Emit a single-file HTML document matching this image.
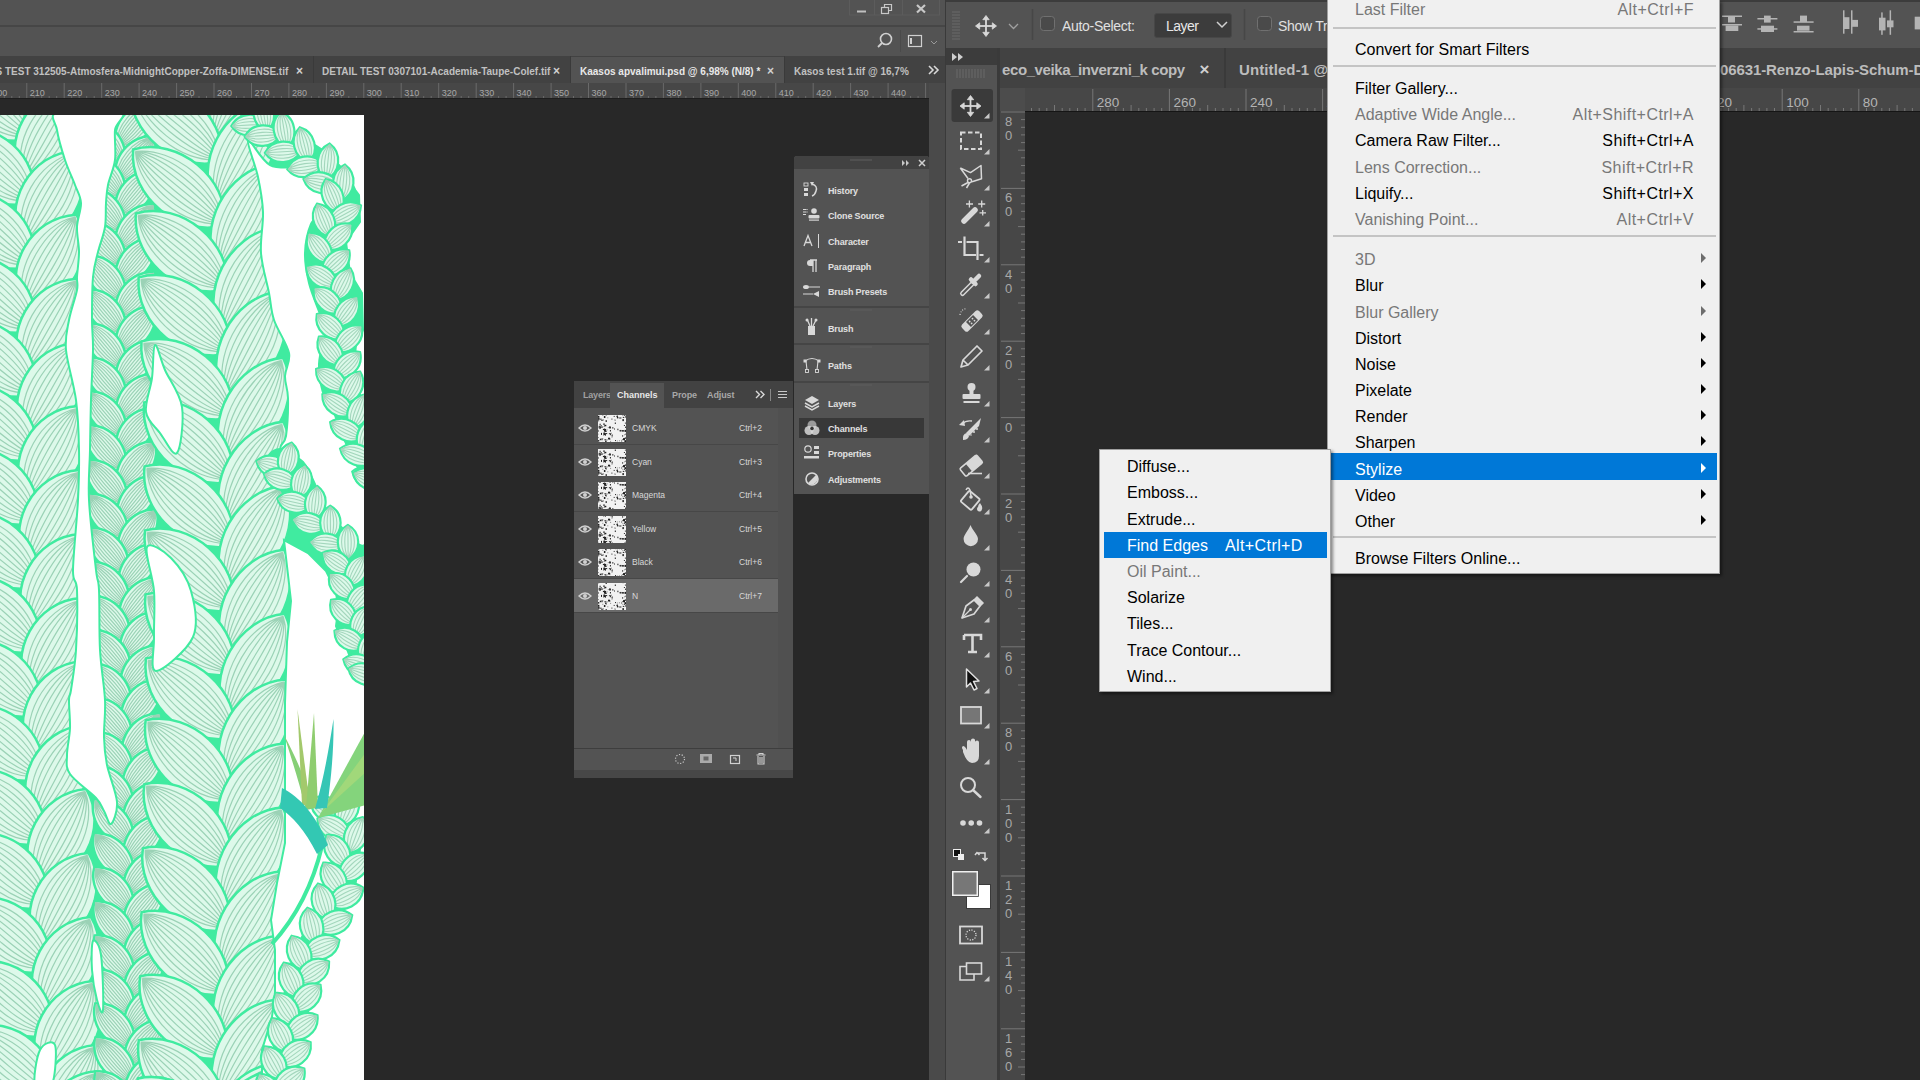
<!DOCTYPE html><html><head><meta charset="utf-8"><style>
html,body{margin:0;padding:0}
body{width:1920px;height:1080px;overflow:hidden;position:relative;background:#282828;font-family:"Liberation Sans",sans-serif}
div{position:absolute;box-sizing:border-box}
.t{white-space:nowrap;line-height:1}
svg{position:absolute;overflow:visible}
</style></head><body><div style="left:0px;top:0px;width:945px;height:25px;background:#535353;"></div>
<div style="left:0px;top:25px;width:945px;height:2px;background:#464646;"></div>
<div style="left:0px;top:27px;width:945px;height:29px;background:#535353;"></div>
<div style="left:0px;top:56px;width:945px;height:27px;background:#424242;"></div>
<div style="left:0px;top:83px;width:929px;height:15px;background:#474747;"></div>
<div style="left:929px;top:83px;width:16px;height:997px;background:#4a4a4a;"></div>
<div style="left:945px;top:0px;width:1px;height:1080px;background:#3a3a3a;"></div>
<svg style="left:0;top:0" width="1920" height="60"><rect x="849.5" y="-1" width="90" height="16" fill="none" stroke="#5c5c5c" stroke-width="1"/><line x1="874.5" y1="0" x2="874.5" y2="15" stroke="#5c5c5c"/><line x1="902.5" y1="0" x2="902.5" y2="15" stroke="#5c5c5c"/><rect x="857" y="10.5" width="9" height="2" fill="#c0c0c0"/><rect x="881.5" y="7.5" width="7" height="6" fill="none" stroke="#c8c8c8" stroke-width="1.2"/><path d="M884.5 7.5 V4.5 H891.5 V10.5 H888.5" fill="none" stroke="#c8c8c8" stroke-width="1.2"/><path d="M917 5 L925 12.5 M925 5 L917 12.5" stroke="#c8c8c8" stroke-width="2.2"/><circle cx="886" cy="39" r="5.5" fill="none" stroke="#d0d0d0" stroke-width="1.6"/><line x1="882" y1="43" x2="878" y2="47" stroke="#d0d0d0" stroke-width="1.8"/><line x1="900.5" y1="30" x2="900.5" y2="52" stroke="#4a4a4a"/><rect x="908.5" y="35.5" width="13" height="11" fill="none" stroke="#d0d0d0" stroke-width="1.2"/><rect x="910" y="38" width="2" height="6" fill="#d0d0d0"/><path d="M931 41 L934 44 L937 41" fill="none" stroke="#999" stroke-width="1"/></svg>
<div style="left:313px;top:56px;width:1px;height:27px;background:#3a3a3a;"></div>
<div style="left:570px;top:56px;width:1px;height:27px;background:#3a3a3a;"></div>
<div style="left:571px;top:57px;width:213px;height:26px;background:#535353;"></div>
<div style="left:784px;top:56px;width:1px;height:27px;background:#3a3a3a;"></div>
<div class="t" style="left:-4.5px;top:67px;font-size:10px;color:#c0c0c0;font-weight:700;">S TEST 312505-Atmosfera-MidnightCopper-Zoffa-DIMENSE.tif</div>
<div class="t" style="left:296px;top:65px;font-size:12px;color:#d0d0d0;font-weight:700;">&#215;</div>
<div class="t" style="left:322px;top:67px;font-size:10px;color:#c0c0c0;font-weight:700;">DETAIL TEST 0307101-Academia-Taupe-Colef.tif</div>
<div class="t" style="left:553px;top:65px;font-size:12px;color:#d0d0d0;font-weight:700;">&#215;</div>
<div class="t" style="left:580px;top:67px;font-size:10px;color:#e8e8e8;font-weight:700;">Kaasos apvalimui.psd @ 6,98% (N/8) *</div>
<div class="t" style="left:767px;top:65px;font-size:12px;color:#d0d0d0;font-weight:700;">&#215;</div>
<div class="t" style="left:794px;top:67px;font-size:10px;color:#c0c0c0;font-weight:700;">Kasos test 1.tif @ 16,7%</div>
<svg style="left:0;top:0" width="945" height="90"><path d="M929,66 L933,70 L929,74 M934,66 L938,70 L934,74" fill="none" stroke="#d8d8d8" stroke-width="1.6"/></svg>
<svg style="left:0;top:0" width="930" height="100"><line x1="-10.7" y1="83" x2="-10.7" y2="98" stroke="#6a6a6a" stroke-width="1"/><text x="-7.7" y="96" font-size="9" fill="#a8a8a8" font-family="Liberation Sans">200</text><line x1="-3.2" y1="96" x2="-3.2" y2="98" stroke="#6a6a6a" stroke-width="1"/><line x1="4.3" y1="96" x2="4.3" y2="98" stroke="#6a6a6a" stroke-width="1"/><line x1="11.8" y1="96" x2="11.8" y2="98" stroke="#6a6a6a" stroke-width="1"/><line x1="19.3" y1="96" x2="19.3" y2="98" stroke="#6a6a6a" stroke-width="1"/><line x1="26.8" y1="83" x2="26.8" y2="98" stroke="#6a6a6a" stroke-width="1"/><text x="29.8" y="96" font-size="9" fill="#a8a8a8" font-family="Liberation Sans">210</text><line x1="34.2" y1="96" x2="34.2" y2="98" stroke="#6a6a6a" stroke-width="1"/><line x1="41.7" y1="96" x2="41.7" y2="98" stroke="#6a6a6a" stroke-width="1"/><line x1="49.2" y1="96" x2="49.2" y2="98" stroke="#6a6a6a" stroke-width="1"/><line x1="56.7" y1="96" x2="56.7" y2="98" stroke="#6a6a6a" stroke-width="1"/><line x1="64.2" y1="83" x2="64.2" y2="98" stroke="#6a6a6a" stroke-width="1"/><text x="67.2" y="96" font-size="9" fill="#a8a8a8" font-family="Liberation Sans">220</text><line x1="71.7" y1="96" x2="71.7" y2="98" stroke="#6a6a6a" stroke-width="1"/><line x1="79.2" y1="96" x2="79.2" y2="98" stroke="#6a6a6a" stroke-width="1"/><line x1="86.7" y1="96" x2="86.7" y2="98" stroke="#6a6a6a" stroke-width="1"/><line x1="94.2" y1="96" x2="94.2" y2="98" stroke="#6a6a6a" stroke-width="1"/><line x1="101.7" y1="83" x2="101.7" y2="98" stroke="#6a6a6a" stroke-width="1"/><text x="104.7" y="96" font-size="9" fill="#a8a8a8" font-family="Liberation Sans">230</text><line x1="109.1" y1="96" x2="109.1" y2="98" stroke="#6a6a6a" stroke-width="1"/><line x1="116.6" y1="96" x2="116.6" y2="98" stroke="#6a6a6a" stroke-width="1"/><line x1="124.1" y1="96" x2="124.1" y2="98" stroke="#6a6a6a" stroke-width="1"/><line x1="131.6" y1="96" x2="131.6" y2="98" stroke="#6a6a6a" stroke-width="1"/><line x1="139.1" y1="83" x2="139.1" y2="98" stroke="#6a6a6a" stroke-width="1"/><text x="142.1" y="96" font-size="9" fill="#a8a8a8" font-family="Liberation Sans">240</text><line x1="146.6" y1="96" x2="146.6" y2="98" stroke="#6a6a6a" stroke-width="1"/><line x1="154.1" y1="96" x2="154.1" y2="98" stroke="#6a6a6a" stroke-width="1"/><line x1="161.6" y1="96" x2="161.6" y2="98" stroke="#6a6a6a" stroke-width="1"/><line x1="169.1" y1="96" x2="169.1" y2="98" stroke="#6a6a6a" stroke-width="1"/><line x1="176.6" y1="83" x2="176.6" y2="98" stroke="#6a6a6a" stroke-width="1"/><text x="179.6" y="96" font-size="9" fill="#a8a8a8" font-family="Liberation Sans">250</text><line x1="184.0" y1="96" x2="184.0" y2="98" stroke="#6a6a6a" stroke-width="1"/><line x1="191.5" y1="96" x2="191.5" y2="98" stroke="#6a6a6a" stroke-width="1"/><line x1="199.0" y1="96" x2="199.0" y2="98" stroke="#6a6a6a" stroke-width="1"/><line x1="206.5" y1="96" x2="206.5" y2="98" stroke="#6a6a6a" stroke-width="1"/><line x1="214.0" y1="83" x2="214.0" y2="98" stroke="#6a6a6a" stroke-width="1"/><text x="217.0" y="96" font-size="9" fill="#a8a8a8" font-family="Liberation Sans">260</text><line x1="221.5" y1="96" x2="221.5" y2="98" stroke="#6a6a6a" stroke-width="1"/><line x1="229.0" y1="96" x2="229.0" y2="98" stroke="#6a6a6a" stroke-width="1"/><line x1="236.5" y1="96" x2="236.5" y2="98" stroke="#6a6a6a" stroke-width="1"/><line x1="244.0" y1="96" x2="244.0" y2="98" stroke="#6a6a6a" stroke-width="1"/><line x1="251.5" y1="83" x2="251.5" y2="98" stroke="#6a6a6a" stroke-width="1"/><text x="254.5" y="96" font-size="9" fill="#a8a8a8" font-family="Liberation Sans">270</text><line x1="258.9" y1="96" x2="258.9" y2="98" stroke="#6a6a6a" stroke-width="1"/><line x1="266.4" y1="96" x2="266.4" y2="98" stroke="#6a6a6a" stroke-width="1"/><line x1="273.9" y1="96" x2="273.9" y2="98" stroke="#6a6a6a" stroke-width="1"/><line x1="281.4" y1="96" x2="281.4" y2="98" stroke="#6a6a6a" stroke-width="1"/><line x1="288.9" y1="83" x2="288.9" y2="98" stroke="#6a6a6a" stroke-width="1"/><text x="291.9" y="96" font-size="9" fill="#a8a8a8" font-family="Liberation Sans">280</text><line x1="296.4" y1="96" x2="296.4" y2="98" stroke="#6a6a6a" stroke-width="1"/><line x1="303.9" y1="96" x2="303.9" y2="98" stroke="#6a6a6a" stroke-width="1"/><line x1="311.4" y1="96" x2="311.4" y2="98" stroke="#6a6a6a" stroke-width="1"/><line x1="318.9" y1="96" x2="318.9" y2="98" stroke="#6a6a6a" stroke-width="1"/><line x1="326.4" y1="83" x2="326.4" y2="98" stroke="#6a6a6a" stroke-width="1"/><text x="329.4" y="96" font-size="9" fill="#a8a8a8" font-family="Liberation Sans">290</text><line x1="333.8" y1="96" x2="333.8" y2="98" stroke="#6a6a6a" stroke-width="1"/><line x1="341.3" y1="96" x2="341.3" y2="98" stroke="#6a6a6a" stroke-width="1"/><line x1="348.8" y1="96" x2="348.8" y2="98" stroke="#6a6a6a" stroke-width="1"/><line x1="356.3" y1="96" x2="356.3" y2="98" stroke="#6a6a6a" stroke-width="1"/><line x1="363.8" y1="83" x2="363.8" y2="98" stroke="#6a6a6a" stroke-width="1"/><text x="366.8" y="96" font-size="9" fill="#a8a8a8" font-family="Liberation Sans">300</text><line x1="371.3" y1="96" x2="371.3" y2="98" stroke="#6a6a6a" stroke-width="1"/><line x1="378.8" y1="96" x2="378.8" y2="98" stroke="#6a6a6a" stroke-width="1"/><line x1="386.3" y1="96" x2="386.3" y2="98" stroke="#6a6a6a" stroke-width="1"/><line x1="393.8" y1="96" x2="393.8" y2="98" stroke="#6a6a6a" stroke-width="1"/><line x1="401.2" y1="83" x2="401.2" y2="98" stroke="#6a6a6a" stroke-width="1"/><text x="404.2" y="96" font-size="9" fill="#a8a8a8" font-family="Liberation Sans">310</text><line x1="408.7" y1="96" x2="408.7" y2="98" stroke="#6a6a6a" stroke-width="1"/><line x1="416.2" y1="96" x2="416.2" y2="98" stroke="#6a6a6a" stroke-width="1"/><line x1="423.7" y1="96" x2="423.7" y2="98" stroke="#6a6a6a" stroke-width="1"/><line x1="431.2" y1="96" x2="431.2" y2="98" stroke="#6a6a6a" stroke-width="1"/><line x1="438.7" y1="83" x2="438.7" y2="98" stroke="#6a6a6a" stroke-width="1"/><text x="441.7" y="96" font-size="9" fill="#a8a8a8" font-family="Liberation Sans">320</text><line x1="446.2" y1="96" x2="446.2" y2="98" stroke="#6a6a6a" stroke-width="1"/><line x1="453.7" y1="96" x2="453.7" y2="98" stroke="#6a6a6a" stroke-width="1"/><line x1="461.2" y1="96" x2="461.2" y2="98" stroke="#6a6a6a" stroke-width="1"/><line x1="468.7" y1="96" x2="468.7" y2="98" stroke="#6a6a6a" stroke-width="1"/><line x1="476.2" y1="83" x2="476.2" y2="98" stroke="#6a6a6a" stroke-width="1"/><text x="479.2" y="96" font-size="9" fill="#a8a8a8" font-family="Liberation Sans">330</text><line x1="483.6" y1="96" x2="483.6" y2="98" stroke="#6a6a6a" stroke-width="1"/><line x1="491.1" y1="96" x2="491.1" y2="98" stroke="#6a6a6a" stroke-width="1"/><line x1="498.6" y1="96" x2="498.6" y2="98" stroke="#6a6a6a" stroke-width="1"/><line x1="506.1" y1="96" x2="506.1" y2="98" stroke="#6a6a6a" stroke-width="1"/><line x1="513.6" y1="83" x2="513.6" y2="98" stroke="#6a6a6a" stroke-width="1"/><text x="516.6" y="96" font-size="9" fill="#a8a8a8" font-family="Liberation Sans">340</text><line x1="521.1" y1="96" x2="521.1" y2="98" stroke="#6a6a6a" stroke-width="1"/><line x1="528.6" y1="96" x2="528.6" y2="98" stroke="#6a6a6a" stroke-width="1"/><line x1="536.1" y1="96" x2="536.1" y2="98" stroke="#6a6a6a" stroke-width="1"/><line x1="543.6" y1="96" x2="543.6" y2="98" stroke="#6a6a6a" stroke-width="1"/><line x1="551.1" y1="83" x2="551.1" y2="98" stroke="#6a6a6a" stroke-width="1"/><text x="554.1" y="96" font-size="9" fill="#a8a8a8" font-family="Liberation Sans">350</text><line x1="558.5" y1="96" x2="558.5" y2="98" stroke="#6a6a6a" stroke-width="1"/><line x1="566.0" y1="96" x2="566.0" y2="98" stroke="#6a6a6a" stroke-width="1"/><line x1="573.5" y1="96" x2="573.5" y2="98" stroke="#6a6a6a" stroke-width="1"/><line x1="581.0" y1="96" x2="581.0" y2="98" stroke="#6a6a6a" stroke-width="1"/><line x1="588.5" y1="83" x2="588.5" y2="98" stroke="#6a6a6a" stroke-width="1"/><text x="591.5" y="96" font-size="9" fill="#a8a8a8" font-family="Liberation Sans">360</text><line x1="596.0" y1="96" x2="596.0" y2="98" stroke="#6a6a6a" stroke-width="1"/><line x1="603.5" y1="96" x2="603.5" y2="98" stroke="#6a6a6a" stroke-width="1"/><line x1="611.0" y1="96" x2="611.0" y2="98" stroke="#6a6a6a" stroke-width="1"/><line x1="618.5" y1="96" x2="618.5" y2="98" stroke="#6a6a6a" stroke-width="1"/><line x1="626.0" y1="83" x2="626.0" y2="98" stroke="#6a6a6a" stroke-width="1"/><text x="629.0" y="96" font-size="9" fill="#a8a8a8" font-family="Liberation Sans">370</text><line x1="633.4" y1="96" x2="633.4" y2="98" stroke="#6a6a6a" stroke-width="1"/><line x1="640.9" y1="96" x2="640.9" y2="98" stroke="#6a6a6a" stroke-width="1"/><line x1="648.4" y1="96" x2="648.4" y2="98" stroke="#6a6a6a" stroke-width="1"/><line x1="655.9" y1="96" x2="655.9" y2="98" stroke="#6a6a6a" stroke-width="1"/><line x1="663.4" y1="83" x2="663.4" y2="98" stroke="#6a6a6a" stroke-width="1"/><text x="666.4" y="96" font-size="9" fill="#a8a8a8" font-family="Liberation Sans">380</text><line x1="670.9" y1="96" x2="670.9" y2="98" stroke="#6a6a6a" stroke-width="1"/><line x1="678.4" y1="96" x2="678.4" y2="98" stroke="#6a6a6a" stroke-width="1"/><line x1="685.9" y1="96" x2="685.9" y2="98" stroke="#6a6a6a" stroke-width="1"/><line x1="693.4" y1="96" x2="693.4" y2="98" stroke="#6a6a6a" stroke-width="1"/><line x1="700.9" y1="83" x2="700.9" y2="98" stroke="#6a6a6a" stroke-width="1"/><text x="703.9" y="96" font-size="9" fill="#a8a8a8" font-family="Liberation Sans">390</text><line x1="708.3" y1="96" x2="708.3" y2="98" stroke="#6a6a6a" stroke-width="1"/><line x1="715.8" y1="96" x2="715.8" y2="98" stroke="#6a6a6a" stroke-width="1"/><line x1="723.3" y1="96" x2="723.3" y2="98" stroke="#6a6a6a" stroke-width="1"/><line x1="730.8" y1="96" x2="730.8" y2="98" stroke="#6a6a6a" stroke-width="1"/><line x1="738.3" y1="83" x2="738.3" y2="98" stroke="#6a6a6a" stroke-width="1"/><text x="741.3" y="96" font-size="9" fill="#a8a8a8" font-family="Liberation Sans">400</text><line x1="745.8" y1="96" x2="745.8" y2="98" stroke="#6a6a6a" stroke-width="1"/><line x1="753.3" y1="96" x2="753.3" y2="98" stroke="#6a6a6a" stroke-width="1"/><line x1="760.8" y1="96" x2="760.8" y2="98" stroke="#6a6a6a" stroke-width="1"/><line x1="768.3" y1="96" x2="768.3" y2="98" stroke="#6a6a6a" stroke-width="1"/><line x1="775.8" y1="83" x2="775.8" y2="98" stroke="#6a6a6a" stroke-width="1"/><text x="778.8" y="96" font-size="9" fill="#a8a8a8" font-family="Liberation Sans">410</text><line x1="783.2" y1="96" x2="783.2" y2="98" stroke="#6a6a6a" stroke-width="1"/><line x1="790.7" y1="96" x2="790.7" y2="98" stroke="#6a6a6a" stroke-width="1"/><line x1="798.2" y1="96" x2="798.2" y2="98" stroke="#6a6a6a" stroke-width="1"/><line x1="805.7" y1="96" x2="805.7" y2="98" stroke="#6a6a6a" stroke-width="1"/><line x1="813.2" y1="83" x2="813.2" y2="98" stroke="#6a6a6a" stroke-width="1"/><text x="816.2" y="96" font-size="9" fill="#a8a8a8" font-family="Liberation Sans">420</text><line x1="820.7" y1="96" x2="820.7" y2="98" stroke="#6a6a6a" stroke-width="1"/><line x1="828.2" y1="96" x2="828.2" y2="98" stroke="#6a6a6a" stroke-width="1"/><line x1="835.7" y1="96" x2="835.7" y2="98" stroke="#6a6a6a" stroke-width="1"/><line x1="843.2" y1="96" x2="843.2" y2="98" stroke="#6a6a6a" stroke-width="1"/><line x1="850.6" y1="83" x2="850.6" y2="98" stroke="#6a6a6a" stroke-width="1"/><text x="853.6" y="96" font-size="9" fill="#a8a8a8" font-family="Liberation Sans">430</text><line x1="858.1" y1="96" x2="858.1" y2="98" stroke="#6a6a6a" stroke-width="1"/><line x1="865.6" y1="96" x2="865.6" y2="98" stroke="#6a6a6a" stroke-width="1"/><line x1="873.1" y1="96" x2="873.1" y2="98" stroke="#6a6a6a" stroke-width="1"/><line x1="880.6" y1="96" x2="880.6" y2="98" stroke="#6a6a6a" stroke-width="1"/><line x1="888.1" y1="83" x2="888.1" y2="98" stroke="#6a6a6a" stroke-width="1"/><text x="891.1" y="96" font-size="9" fill="#a8a8a8" font-family="Liberation Sans">440</text><line x1="895.6" y1="96" x2="895.6" y2="98" stroke="#6a6a6a" stroke-width="1"/><line x1="903.1" y1="96" x2="903.1" y2="98" stroke="#6a6a6a" stroke-width="1"/><line x1="910.6" y1="96" x2="910.6" y2="98" stroke="#6a6a6a" stroke-width="1"/><line x1="918.1" y1="96" x2="918.1" y2="98" stroke="#6a6a6a" stroke-width="1"/><line x1="925.6" y1="83" x2="925.6" y2="98" stroke="#6a6a6a" stroke-width="1"/></svg>
<div style="left:0px;top:98px;width:929px;height:1px;background:#1e1e1e;"></div>
<div style="left:0px;top:115px;width:364px;height:965px;background:#ffffff;"></div>
<svg style="left:0;top:115px" width="364" height="965" viewBox="0 115 364 965"><defs><clipPath id="cv"><rect x="0" y="115" width="364" height="965"/></clipPath><g id="lf"><path d="M-1,0 C-0.55,-1.05 0.55,-1.05 1,0 C0.55,1.05 -0.55,1.05 -1,0Z" fill="#ddf9ea" stroke="#40eba0" stroke-width="2.5" vector-effect="non-scaling-stroke"/><path d="M-0.95,0 C-0.5,-0.76 0.5,-0.76 0.95,0 M-0.95,0 C-0.5,-0.57 0.5,-0.57 0.95,0 M-0.95,0 C-0.5,-0.38 0.5,-0.38 0.95,0 M-0.95,0 C-0.5,-0.19 0.5,-0.19 0.95,0 M-0.95,0 L0.95,0 M-0.95,0 C-0.5,0.19 0.5,0.19 0.95,0 M-0.95,0 C-0.5,0.38 0.5,0.38 0.95,0 M-0.95,0 C-0.5,0.57 0.5,0.57 0.95,0 M-0.95,0 C-0.5,0.76 0.5,0.76 0.95,0" fill="none" stroke="#9bd2b6" stroke-width="1.2" vector-effect="non-scaling-stroke"/></g><g id="lfs"><path d="M-1,0 C-0.55,-1.05 0.55,-1.05 1,0 C0.55,1.05 -0.55,1.05 -1,0Z" fill="#ddf9ea" stroke="#40eba0" stroke-width="2.2" vector-effect="non-scaling-stroke"/><path d="M-0.95,0 C-0.5,-0.66 0.5,-0.66 0.95,0 M-0.95,0 C-0.5,-0.33 0.5,-0.33 0.95,0 M-0.95,0 L0.95,0 M-0.95,0 C-0.5,0.33 0.5,0.33 0.95,0 M-0.95,0 C-0.5,0.66 0.5,0.66 0.95,0" fill="none" stroke="#a3d6bc" stroke-width="1.1" vector-effect="non-scaling-stroke"/></g></defs><g clip-path="url(#cv)"><rect x="0" y="115" width="364" height="965" fill="#40eba0"/><use href="#lf" transform="translate(-7.8,60.3) rotate(41.5) scale(54.2,37.1)"/><use href="#lf" transform="translate(48.1,69.8) rotate(119.5) scale(54.2,37.1)"/><use href="#lf" transform="translate(-7.4,102.3) rotate(41.5) scale(54.2,37.1)"/><use href="#lf" transform="translate(48.7,133.8) rotate(119.5) scale(54.2,37.1)"/><use href="#lf" transform="translate(-6.8,166.3) rotate(41.5) scale(54.2,37.1)"/><use href="#lf" transform="translate(49.3,197.8) rotate(119.5) scale(54.2,37.1)"/><use href="#lf" transform="translate(-6.3,230.3) rotate(41.5) scale(54.2,37.1)"/><use href="#lf" transform="translate(49.8,261.8) rotate(119.5) scale(54.2,37.1)"/><use href="#lf" transform="translate(-5.7,294.3) rotate(41.5) scale(54.2,37.1)"/><use href="#lf" transform="translate(50.4,325.8) rotate(119.5) scale(54.2,37.1)"/><use href="#lf" transform="translate(-5.1,358.3) rotate(41.5) scale(54.2,37.1)"/><use href="#lf" transform="translate(51.0,389.8) rotate(119.5) scale(54.2,37.1)"/><use href="#lf" transform="translate(-4.4,422.5) rotate(41.0) scale(54.2,37.1)"/><use href="#lf" transform="translate(51.9,453.5) rotate(119.0) scale(54.2,37.1)"/><use href="#lf" transform="translate(-3.3,486.5) rotate(41.0) scale(54.2,37.1)"/><use href="#lf" transform="translate(53.0,517.5) rotate(119.0) scale(54.2,37.1)"/><use href="#lf" transform="translate(-2.3,550.5) rotate(41.0) scale(54.2,37.1)"/><use href="#lf" transform="translate(54.1,581.5) rotate(119.0) scale(54.2,37.1)"/><use href="#lf" transform="translate(-1.2,614.5) rotate(41.0) scale(54.2,37.1)"/><use href="#lf" transform="translate(55.1,645.5) rotate(119.0) scale(54.2,37.1)"/><use href="#lf" transform="translate(-0.1,678.4) rotate(41.0) scale(54.2,37.1)"/><use href="#lf" transform="translate(56.4,709.0) rotate(118.0) scale(54.2,37.1)"/><use href="#lf" transform="translate(1.8,743.0) rotate(40.0) scale(54.2,37.1)"/><use href="#lf" transform="translate(58.7,773.0) rotate(118.0) scale(54.2,37.1)"/><use href="#lf" transform="translate(4.0,806.9) rotate(40.0) scale(54.2,37.1)"/><use href="#lf" transform="translate(60.9,836.9) rotate(118.0) scale(54.2,37.1)"/><use href="#lf" transform="translate(6.3,870.9) rotate(40.0) scale(54.2,37.1)"/><use href="#lf" transform="translate(63.2,900.9) rotate(118.0) scale(54.2,37.1)"/><use href="#lf" transform="translate(8.6,934.9) rotate(40.0) scale(54.2,37.1)"/><use href="#lf" transform="translate(65.5,964.8) rotate(118.0) scale(54.2,37.1)"/><use href="#lf" transform="translate(10.9,998.8) rotate(40.0) scale(54.2,37.1)"/><use href="#lf" transform="translate(67.8,1028.8) rotate(118.0) scale(54.2,37.1)"/><use href="#lf" transform="translate(13.2,1062.8) rotate(40.0) scale(54.2,37.1)"/><use href="#lf" transform="translate(70.1,1092.8) rotate(118.0) scale(54.2,37.1)"/><use href="#lf" transform="translate(15.3,1121.1) rotate(40.0) scale(54.2,37.1)"/><use href="#lf" transform="translate(71.0,1119.1) rotate(118.0) scale(54.2,37.1)"/><use href="#lf" transform="translate(15.3,1121.1) rotate(40.0) scale(54.2,37.1)"/><use href="#lf" transform="translate(105.0,120.0) rotate(49.8) scale(29.6,18.7)"/><use href="#lf" transform="translate(135.1,125.0) rotate(129.8) scale(29.6,18.7)"/><use href="#lf" transform="translate(105.0,142.0) rotate(49.8) scale(29.6,18.7)"/><use href="#lf" transform="translate(135.2,159.0) rotate(129.8) scale(29.6,18.7)"/><use href="#lf" transform="translate(105.1,176.0) rotate(49.8) scale(29.6,18.7)"/><use href="#lf" transform="translate(135.3,193.0) rotate(129.8) scale(29.6,18.7)"/><use href="#lf" transform="translate(105.2,210.0) rotate(49.8) scale(29.6,18.7)"/><use href="#lf" transform="translate(135.4,227.0) rotate(129.8) scale(29.6,18.7)"/><use href="#lf" transform="translate(105.3,244.0) rotate(49.8) scale(29.6,18.7)"/><use href="#lf" transform="translate(135.5,261.0) rotate(129.8) scale(29.6,18.7)"/><use href="#lf" transform="translate(105.4,278.0) rotate(49.8) scale(29.6,18.7)"/><use href="#lf" transform="translate(135.6,295.0) rotate(129.8) scale(29.6,18.7)"/><use href="#lf" transform="translate(105.5,312.0) rotate(49.8) scale(29.6,18.7)"/><use href="#lf" transform="translate(135.7,329.0) rotate(129.8) scale(29.6,18.7)"/><use href="#lf" transform="translate(105.6,346.0) rotate(49.8) scale(29.6,18.7)"/><use href="#lf" transform="translate(135.8,363.0) rotate(129.8) scale(29.6,18.7)"/><use href="#lf" transform="translate(105.7,380.0) rotate(49.8) scale(29.6,18.7)"/><use href="#lf" transform="translate(135.9,397.0) rotate(129.8) scale(29.6,18.7)"/><use href="#lf" transform="translate(105.9,414.0) rotate(49.8) scale(29.6,18.7)"/><use href="#lf" transform="translate(136.0,431.0) rotate(129.8) scale(29.6,18.7)"/><use href="#lf" transform="translate(106.0,448.0) rotate(49.8) scale(29.6,18.7)"/><use href="#lf" transform="translate(136.3,464.7) rotate(128.9) scale(29.6,18.7)"/><use href="#lf" transform="translate(106.6,482.3) rotate(48.9) scale(29.6,18.7)"/><use href="#lf" transform="translate(137.0,498.7) rotate(128.9) scale(29.6,18.7)"/><use href="#lf" transform="translate(107.3,516.3) rotate(48.9) scale(29.6,18.7)"/><use href="#lf" transform="translate(137.7,532.7) rotate(128.9) scale(29.6,18.7)"/><use href="#lf" transform="translate(108.0,550.3) rotate(48.9) scale(29.6,18.7)"/><use href="#lf" transform="translate(138.4,566.7) rotate(128.9) scale(29.6,18.7)"/><use href="#lf" transform="translate(108.6,584.3) rotate(48.9) scale(29.6,18.7)"/><use href="#lf" transform="translate(139.1,600.7) rotate(128.9) scale(29.6,18.7)"/><use href="#lf" transform="translate(109.3,618.3) rotate(48.9) scale(29.6,18.7)"/><use href="#lf" transform="translate(139.7,634.7) rotate(128.9) scale(29.6,18.7)"/><use href="#lf" transform="translate(110.0,652.3) rotate(48.9) scale(29.6,18.7)"/><use href="#lf" transform="translate(140.4,668.7) rotate(128.9) scale(29.6,18.7)"/><use href="#lf" transform="translate(110.7,686.3) rotate(48.9) scale(29.6,18.7)"/><use href="#lf" transform="translate(141.1,702.6) rotate(128.9) scale(29.6,18.7)"/><use href="#lf" transform="translate(111.4,720.2) rotate(48.9) scale(29.6,18.7)"/><use href="#lf" transform="translate(141.8,736.6) rotate(128.9) scale(29.6,18.7)"/><use href="#lf" transform="translate(112.0,754.2) rotate(48.9) scale(29.6,18.7)"/><use href="#lf" transform="translate(142.5,770.6) rotate(128.9) scale(29.6,18.7)"/><use href="#lf" transform="translate(112.7,788.2) rotate(48.9) scale(29.6,18.7)"/><use href="#lf" transform="translate(143.1,804.8) rotate(129.6) scale(29.6,18.7)"/><use href="#lf" transform="translate(113.1,822.0) rotate(49.6) scale(29.6,18.7)"/><use href="#lf" transform="translate(143.3,838.8) rotate(129.6) scale(29.6,18.7)"/><use href="#lf" transform="translate(113.3,856.0) rotate(49.6) scale(29.6,18.7)"/><use href="#lf" transform="translate(143.5,872.8) rotate(129.6) scale(29.6,18.7)"/><use href="#lf" transform="translate(113.5,890.0) rotate(49.6) scale(29.6,18.7)"/><use href="#lf" transform="translate(143.7,906.8) rotate(129.6) scale(29.6,18.7)"/><use href="#lf" transform="translate(113.7,924.0) rotate(49.6) scale(29.6,18.7)"/><use href="#lf" transform="translate(143.9,940.8) rotate(129.6) scale(29.6,18.7)"/><use href="#lf" transform="translate(113.9,958.0) rotate(49.6) scale(29.6,18.7)"/><use href="#lf" transform="translate(144.1,974.8) rotate(129.6) scale(29.6,18.7)"/><use href="#lf" transform="translate(114.2,992.0) rotate(49.6) scale(29.6,18.7)"/><use href="#lf" transform="translate(144.3,1008.8) rotate(129.6) scale(29.6,18.7)"/><use href="#lf" transform="translate(114.4,1026.0) rotate(49.6) scale(29.6,18.7)"/><use href="#lf" transform="translate(144.6,1042.8) rotate(129.6) scale(29.6,18.7)"/><use href="#lf" transform="translate(114.6,1060.0) rotate(49.6) scale(29.6,18.7)"/><use href="#lf" transform="translate(144.8,1076.8) rotate(129.6) scale(29.6,18.7)"/><use href="#lf" transform="translate(114.8,1094.0) rotate(49.6) scale(29.6,18.7)"/><use href="#lf" transform="translate(145.0,1110.8) rotate(129.6) scale(29.6,18.7)"/><use href="#lf" transform="translate(115.0,1120.1) rotate(49.6) scale(29.6,18.7)"/><use href="#lf" transform="translate(145.0,1119.9) rotate(129.6) scale(29.6,18.7)"/><use href="#lf" transform="translate(173.4,61.5) rotate(39.5) scale(59.5,37.1)"/><use href="#lf" transform="translate(239.8,88.6) rotate(117.5) scale(59.5,37.1)"/><use href="#lf" transform="translate(176.2,123.4) rotate(39.5) scale(59.5,37.1)"/><use href="#lf" transform="translate(242.6,152.5) rotate(117.5) scale(59.5,37.1)"/><use href="#lf" transform="translate(179.0,187.4) rotate(39.5) scale(59.5,37.1)"/><use href="#lf" transform="translate(245.4,216.5) rotate(117.5) scale(59.5,37.1)"/><use href="#lf" transform="translate(181.8,251.3) rotate(39.5) scale(59.5,37.1)"/><use href="#lf" transform="translate(248.3,280.4) rotate(117.5) scale(59.5,37.1)"/><use href="#lf" transform="translate(184.6,315.2) rotate(39.5) scale(59.5,37.1)"/><use href="#lf" transform="translate(251.1,344.3) rotate(117.5) scale(59.5,37.1)"/><use href="#lf" transform="translate(187.4,379.2) rotate(39.5) scale(59.5,37.1)"/><use href="#lf" transform="translate(253.6,409.5) rotate(119.6) scale(59.5,37.1)"/><use href="#lf" transform="translate(188.7,441.9) rotate(41.6) scale(59.5,37.1)"/><use href="#lf" transform="translate(254.0,473.5) rotate(119.6) scale(59.5,37.1)"/><use href="#lf" transform="translate(189.1,505.9) rotate(41.6) scale(59.5,37.1)"/><use href="#lf" transform="translate(254.4,537.5) rotate(119.6) scale(59.5,37.1)"/><use href="#lf" transform="translate(189.5,569.9) rotate(41.6) scale(59.5,37.1)"/><use href="#lf" transform="translate(254.8,601.5) rotate(119.6) scale(59.5,37.1)"/><use href="#lf" transform="translate(190.0,633.9) rotate(41.6) scale(59.5,37.1)"/><use href="#lf" transform="translate(255.3,665.5) rotate(119.6) scale(59.5,37.1)"/><use href="#lf" transform="translate(190.4,697.9) rotate(41.6) scale(59.5,37.1)"/><use href="#lf" transform="translate(254.9,730.3) rotate(121.2) scale(59.5,37.1)"/><use href="#lf" transform="translate(189.1,760.9) rotate(43.2) scale(59.5,37.1)"/><use href="#lf" transform="translate(253.5,794.3) rotate(121.2) scale(59.5,37.1)"/><use href="#lf" transform="translate(187.7,824.9) rotate(43.2) scale(59.5,37.1)"/><use href="#lf" transform="translate(252.1,858.3) rotate(121.2) scale(59.5,37.1)"/><use href="#lf" transform="translate(186.3,888.9) rotate(43.2) scale(59.5,37.1)"/><use href="#lf" transform="translate(250.7,922.3) rotate(121.2) scale(59.5,37.1)"/><use href="#lf" transform="translate(185.0,952.9) rotate(43.2) scale(59.5,37.1)"/><use href="#lf" transform="translate(249.4,986.3) rotate(121.2) scale(59.5,37.1)"/><use href="#lf" transform="translate(183.6,1016.9) rotate(43.2) scale(59.5,37.1)"/><use href="#lf" transform="translate(248.0,1050.3) rotate(121.2) scale(59.5,37.1)"/><use href="#lf" transform="translate(182.2,1080.9) rotate(43.2) scale(59.5,37.1)"/><use href="#lf" transform="translate(246.6,1114.2) rotate(121.2) scale(59.5,37.1)"/><use href="#lf" transform="translate(181.4,1119.3) rotate(43.2) scale(59.5,37.1)"/><use href="#lf" transform="translate(246.5,1120.7) rotate(121.2) scale(59.5,37.1)"/><use href="#lf" transform="translate(181.4,1119.3) rotate(43.2) scale(59.5,37.1)"/><path d="M58.0,112.0 C68.5,109.0 110.5,109.0 120.0,112.0 C129.5,115.0 115.8,122.0 115.0,130.0 C114.2,138.0 116.2,150.8 115.0,160.0 C113.8,169.2 109.5,177.8 108.0,185.0 C106.5,192.2 106.5,196.0 106.0,203.0 C105.5,210.0 106.3,218.8 105.0,227.0 C103.7,235.2 100.0,243.7 98.0,252.0 C96.0,260.3 94.0,265.7 93.0,277.0 C92.0,288.3 92.0,307.8 92.0,320.0 C92.0,332.2 93.2,336.7 93.0,350.0 C92.8,363.3 91.5,383.3 91.0,400.0 C90.5,416.7 90.3,433.3 90.0,450.0 C89.7,466.7 88.0,480.0 89.0,500.0 C90.0,520.0 94.3,555.0 96.0,570.0 C97.7,585.0 98.3,576.7 99.0,590.0 C99.7,603.3 99.0,631.7 100.0,650.0 C101.0,668.3 104.3,685.5 105.0,700.0 C105.7,714.5 103.7,726.2 104.0,737.0 C104.3,747.8 104.8,754.2 107.0,765.0 C109.2,775.8 116.3,792.2 117.0,802.0 C117.7,811.8 113.2,822.5 111.0,824.0 C108.8,825.5 106.5,815.3 104.0,811.0 C101.5,806.7 101.7,804.2 96.0,798.0 C90.3,791.8 74.8,781.2 70.0,774.0 C65.2,766.8 67.0,762.7 67.0,755.0 C67.0,747.3 69.7,737.2 70.0,728.0 C70.3,718.8 68.8,706.3 69.0,700.0 C69.2,693.7 69.8,698.3 71.0,690.0 C72.2,681.7 75.0,666.7 76.0,650.0 C77.0,633.3 77.5,603.3 77.0,590.0 C76.5,576.7 72.8,585.0 73.0,570.0 C73.2,555.0 77.0,520.0 78.0,500.0 C79.0,480.0 79.3,466.7 79.0,450.0 C78.7,433.3 78.2,416.7 76.0,400.0 C73.8,383.3 67.2,363.3 66.0,350.0 C64.8,336.7 67.2,330.0 69.0,320.0 C70.8,310.0 75.7,297.2 77.0,290.0 C78.3,282.8 76.7,283.3 77.0,277.0 C77.3,270.7 79.0,260.3 79.0,252.0 C79.0,243.7 76.7,235.2 77.0,227.0 C77.3,218.8 81.3,210.0 81.0,203.0 C80.7,196.0 77.7,192.2 75.0,185.0 C72.3,177.8 68.0,169.2 65.0,160.0 C62.0,150.8 58.2,138.0 57.0,130.0 C55.8,122.0 47.5,115.0 58.0,112.0Z" fill="#ffffff" stroke="#40eba0" stroke-width="2"/><path d="M155.0,345.0 C157.2,343.7 160.5,359.7 165.0,370.0 C169.5,380.3 180.0,393.2 182.0,407.0 C184.0,420.8 180.7,448.7 177.0,453.0 C173.3,457.3 165.2,439.8 160.0,433.0 C154.8,426.2 147.3,421.2 146.0,412.0 C144.7,402.8 150.5,389.2 152.0,378.0 C153.5,366.8 152.8,346.3 155.0,345.0Z" fill="#ffffff" stroke="#40eba0" stroke-width="2"/><path d="M147.0,547.0 C149.8,541.5 163.7,550.7 171.0,558.0 C178.3,565.3 187.3,577.8 191.0,591.0 C194.7,604.2 198.8,623.7 193.0,637.0 C187.2,650.3 162.5,671.0 156.0,671.0 C149.5,671.0 154.3,650.3 154.0,637.0 C153.7,623.7 155.2,606.0 154.0,591.0 C152.8,576.0 144.2,552.5 147.0,547.0Z" fill="#ffffff" stroke="#40eba0" stroke-width="2"/><path d="M281,112 L368,112 L368,400 L363,400 L358,391 L354,365 L356,345 L363,330 L362,293 L350,273 L346,242 L360,222 L359,195 L344,175 L311,151 L281,122Z" fill="#ffffff" stroke="#40eba0" stroke-width="2"/><path d="M248.0,140.0 C250.0,138.0 260.5,159.8 270.0,165.0 C279.5,170.2 295.7,164.5 305.0,171.0 C314.3,177.5 325.0,195.2 326.0,204.0 C327.0,212.8 314.5,215.8 311.0,224.0 C307.5,232.2 305.3,243.2 305.0,253.0 C304.7,262.8 306.5,272.8 309.0,283.0 C311.5,293.2 317.2,306.2 320.0,314.0 C322.8,321.8 326.2,321.7 326.0,330.0 C325.8,338.3 319.2,352.7 319.0,364.0 C318.8,375.3 321.3,388.7 325.0,398.0 C328.7,407.3 335.0,410.8 341.0,420.0 C347.0,429.2 356.8,446.0 361.0,453.0 C365.2,460.0 365.2,447.2 366.0,462.0 C366.8,476.8 369.5,530.5 366.0,542.0 C362.5,553.5 351.3,535.8 345.0,531.0 C338.7,526.2 332.3,519.3 328.0,513.0 C323.7,506.7 323.2,501.5 319.0,493.0 C314.8,484.5 309.3,469.3 303.0,462.0 C296.7,454.7 283.8,453.3 281.0,449.0 C278.2,444.7 284.8,444.5 286.0,436.0 C287.2,427.5 288.2,408.0 288.0,398.0 C287.8,388.0 284.8,383.5 285.0,376.0 C285.2,368.5 290.8,362.3 289.0,353.0 C287.2,343.7 277.3,330.0 274.0,320.0 C270.7,310.0 271.2,304.2 269.0,293.0 C266.8,281.8 262.0,266.5 261.0,253.0 C260.0,239.5 263.5,224.7 263.0,212.0 C262.5,199.3 260.5,189.0 258.0,177.0 C255.5,165.0 246.0,142.0 248.0,140.0Z" fill="#ffffff" stroke="#40eba0" stroke-width="2"/><path d="M284,540 L308,553 L326,571 L336,591 L338,611 L336,626 L344,646 L368,658 L368,1084 L262,1084 L262,1050 L272,1017 L275,992 L275,950 L271,920 L277,883 L285,843 L285,761 L285,703 L287,642 L291,601Z" fill="#ffffff" stroke="#40eba0" stroke-width="2"/><path d="M93.0,941.0 C94.5,938.5 99.3,943.5 101.0,955.0 C102.7,966.5 103.7,1002.5 103.0,1010.0 C102.3,1017.5 98.8,1006.7 97.0,1000.0 C95.2,993.3 92.7,979.8 92.0,970.0 C91.3,960.2 91.5,943.5 93.0,941.0Z" fill="#ffffff" stroke="#40eba0" stroke-width="2"/><path d="M40.0,1050.0 C43.3,1043.5 53.0,1039.3 55.0,1045.0 C57.0,1050.7 55.3,1077.5 52.0,1084.0 C48.7,1090.5 37.0,1089.7 35.0,1084.0 C33.0,1078.3 36.7,1056.5 40.0,1050.0Z" fill="#ffffff" stroke="#40eba0" stroke-width="2"/><path d="M255.0,118.0 C260.8,122.7 279.2,138.0 290.0,146.0 C300.8,154.0 311.3,157.7 320.0,166.0 C328.7,174.3 340.3,185.3 342.0,196.0 C343.7,206.7 332.5,219.0 330.0,230.0 C327.5,241.0 326.0,251.2 327.0,262.0 C328.0,272.8 333.8,282.8 336.0,295.0 C338.2,307.2 339.7,322.5 340.0,335.0 C340.3,347.5 336.7,357.5 338.0,370.0 C339.3,382.5 344.0,397.5 348.0,410.0 C352.0,422.5 357.0,434.2 362.0,445.0 C367.0,455.8 375.3,470.0 378.0,475.0" fill="none" stroke="#40eba0" stroke-width="30" stroke-linecap="round"/><use href="#lfs" transform="translate(249.4,125.0) rotate(-3.3) scale(18.1,13.0)"/><use href="#lfs" transform="translate(263.7,113.5) rotate(80.7) scale(18.1,13.0)"/><use href="#lfs" transform="translate(262.7,135.6) rotate(-3.3) scale(18.1,13.0)"/><use href="#lfs" transform="translate(284.0,129.8) rotate(80.7) scale(18.1,13.0)"/><use href="#lfs" transform="translate(283.0,151.8) rotate(-3.3) scale(18.1,13.0)"/><use href="#lfs" transform="translate(304.3,144.8) rotate(75.7) scale(18.1,13.0)"/><use href="#lfs" transform="translate(305.2,166.8) rotate(-8.3) scale(18.1,13.0)"/><use href="#lfs" transform="translate(327.9,161.6) rotate(95.7) scale(18.1,13.0)"/><use href="#lfs" transform="translate(321.2,182.7) rotate(11.7) scale(18.1,13.0)"/><use href="#lfs" transform="translate(343.2,182.6) rotate(95.7) scale(18.1,13.0)"/><use href="#lfs" transform="translate(332.6,195.8) rotate(67.4) scale(18.1,13.0)"/><use href="#lfs" transform="translate(345.1,214.0) rotate(151.4) scale(18.1,13.0)"/><use href="#lfs" transform="translate(324.0,220.3) rotate(67.4) scale(18.1,13.0)"/><use href="#lfs" transform="translate(338.3,236.7) rotate(137.4) scale(18.1,13.0)"/><use href="#lfs" transform="translate(319.3,247.9) rotate(53.4) scale(18.1,13.0)"/><use href="#lfs" transform="translate(335.9,262.6) rotate(137.4) scale(18.1,13.0)"/><use href="#lfs" transform="translate(321.7,276.6) rotate(32.7) scale(18.1,13.0)"/><use href="#lfs" transform="translate(342.4,284.5) rotate(116.7) scale(18.1,13.0)"/><use href="#lfs" transform="translate(327.6,300.4) rotate(42.3) scale(18.1,13.0)"/><use href="#lfs" transform="translate(346.6,311.5) rotate(126.3) scale(18.1,13.0)"/><use href="#lfs" transform="translate(330.2,326.3) rotate(42.3) scale(18.1,13.0)"/><use href="#lfs" transform="translate(348.7,338.8) rotate(135.3) scale(18.1,13.0)"/><use href="#lfs" transform="translate(330.2,350.8) rotate(51.3) scale(18.1,13.0)"/><use href="#lfs" transform="translate(347.2,364.8) rotate(135.3) scale(18.1,13.0)"/><use href="#lfs" transform="translate(331.1,379.2) rotate(34.0) scale(18.1,13.0)"/><use href="#lfs" transform="translate(351.6,387.5) rotate(118.0) scale(18.1,13.0)"/><use href="#lfs" transform="translate(337.4,404.4) rotate(34.0) scale(18.1,13.0)"/><use href="#lfs" transform="translate(358.2,411.4) rotate(110.2) scale(18.1,13.0)"/><use href="#lfs" transform="translate(346.4,430.1) rotate(26.2) scale(18.1,13.0)"/><use href="#lfs" transform="translate(367.8,435.5) rotate(110.2) scale(18.1,13.0)"/><use href="#lfs" transform="translate(357.1,454.8) rotate(19.9) scale(18.1,13.0)"/><use href="#lfs" transform="translate(379.0,457.9) rotate(103.9) scale(18.1,13.0)"/><use href="#lfs" transform="translate(369.3,477.7) rotate(19.9) scale(18.1,13.0)"/><use href="#lfs" transform="translate(385.9,470.8) rotate(103.9) scale(18.1,13.0)"/><use href="#lfs" transform="translate(370.1,479.2) rotate(19.9) scale(18.1,13.0)"/><path d="M280.0,462.0 C283.3,467.7 293.3,485.7 300.0,496.0 C306.7,506.3 313.0,515.3 320.0,524.0 C327.0,532.7 337.0,538.7 342.0,548.0 C347.0,557.3 348.3,568.0 350.0,580.0 C351.7,592.0 350.0,608.0 352.0,620.0 C354.0,632.0 358.7,643.7 362.0,652.0 C365.3,660.3 370.3,667.0 372.0,670.0" fill="none" stroke="#40eba0" stroke-width="28" stroke-linecap="round"/><use href="#lfs" transform="translate(272.7,466.3) rotate(17.5) scale(17.1,13.0)"/><use href="#lfs" transform="translate(288.3,459.4) rotate(101.5) scale(17.1,13.0)"/><use href="#lfs" transform="translate(280.3,479.2) rotate(17.5) scale(17.1,13.0)"/><use href="#lfs" transform="translate(301.5,481.8) rotate(101.5) scale(17.1,13.0)"/><use href="#lfs" transform="translate(294.0,502.2) rotate(12.5) scale(17.1,13.0)"/><use href="#lfs" transform="translate(315.3,502.9) rotate(96.5) scale(17.1,13.0)"/><use href="#lfs" transform="translate(309.1,523.3) rotate(12.5) scale(17.1,13.0)"/><use href="#lfs" transform="translate(330.4,522.8) rotate(89.5) scale(17.1,13.0)"/><use href="#lfs" transform="translate(326.7,543.8) rotate(5.5) scale(17.1,13.0)"/><use href="#lfs" transform="translate(348.0,542.0) rotate(89.5) scale(17.1,13.0)"/><use href="#lfs" transform="translate(336.8,562.3) rotate(34.0) scale(17.1,13.0)"/><use href="#lfs" transform="translate(356.4,570.8) rotate(118.0) scale(17.1,13.0)"/><use href="#lfs" transform="translate(341.8,586.0) rotate(45.1) scale(17.1,13.0)"/><use href="#lfs" transform="translate(359.4,598.2) rotate(129.1) scale(17.1,13.0)"/><use href="#lfs" transform="translate(343.1,612.0) rotate(45.1) scale(17.1,13.0)"/><use href="#lfs" transform="translate(361.4,621.8) rotate(114.6) scale(17.1,13.0)"/><use href="#lfs" transform="translate(349.2,639.3) rotate(30.6) scale(17.1,13.0)"/><use href="#lfs" transform="translate(369.2,646.6) rotate(114.6) scale(17.1,13.0)"/><use href="#lfs" transform="translate(359.5,664.9) rotate(18.9) scale(17.1,13.0)"/><use href="#lfs" transform="translate(379.4,665.9) rotate(102.9) scale(17.1,13.0)"/><use href="#lfs" transform="translate(364.6,674.1) rotate(18.9) scale(17.1,13.0)"/><path d="M322,846 C314,880 298,915 272,944" fill="none" stroke="#40eba0" stroke-width="4"/><path d="M336,806 L348,840 L343,880 L328,915 L310,950 L298,990 L294,1020 L284,1060 L276,1100" fill="none" stroke="#40eba0" stroke-width="28" stroke-linejoin="round"/><use href="#lfs" transform="translate(327.1,809.1) rotate(30.6) scale(19.0,14.6)"/><use href="#lfs" transform="translate(346.9,808.5) rotate(110.6) scale(19.0,14.6)"/><use href="#lfs" transform="translate(333.8,828.0) rotate(30.6) scale(19.0,14.6)"/><use href="#lfs" transform="translate(356.2,834.9) rotate(110.6) scale(19.0,14.6)"/><use href="#lfs" transform="translate(337.2,850.7) rotate(57.1) scale(19.0,14.6)"/><use href="#lfs" transform="translate(354.1,866.9) rotate(137.1) scale(19.0,14.6)"/><use href="#lfs" transform="translate(333.7,878.5) rotate(57.1) scale(19.0,14.6)"/><use href="#lfs" transform="translate(346.3,896.2) rotate(153.2) scale(19.0,14.6)"/><use href="#lfs" transform="translate(323.5,901.7) rotate(73.2) scale(19.0,14.6)"/><use href="#lfs" transform="translate(334.7,922.5) rotate(157.2) scale(19.0,14.6)"/><use href="#lfs" transform="translate(311.6,926.3) rotate(77.2) scale(19.0,14.6)"/><use href="#lfs" transform="translate(321.9,947.4) rotate(157.2) scale(19.0,14.6)"/><use href="#lfs" transform="translate(299.2,953.2) rotate(66.7) scale(19.0,14.6)"/><use href="#lfs" transform="translate(313.2,972.0) rotate(146.7) scale(19.0,14.6)"/><use href="#lfs" transform="translate(291.2,980.1) rotate(66.7) scale(19.0,14.6)"/><use href="#lfs" transform="translate(306.5,997.6) rotate(137.6) scale(19.0,14.6)"/><use href="#lfs" transform="translate(286.0,1009.0) rotate(57.6) scale(19.0,14.6)"/><use href="#lfs" transform="translate(302.1,1026.3) rotate(144.0) scale(19.0,14.6)"/><use href="#lfs" transform="translate(280.5,1035.3) rotate(64.0) scale(19.0,14.6)"/><use href="#lfs" transform="translate(295.3,1053.5) rotate(144.0) scale(19.0,14.6)"/><use href="#lfs" transform="translate(273.8,1063.0) rotate(61.3) scale(19.0,14.6)"/><use href="#lfs" transform="translate(289.5,1080.4) rotate(141.3) scale(19.0,14.6)"/><use href="#lfs" transform="translate(268.3,1090.5) rotate(61.3) scale(19.0,14.6)"/><use href="#lfs" transform="translate(285.2,1101.8) rotate(141.3) scale(19.0,14.6)"/><use href="#lfs" transform="translate(266.8,1098.2) rotate(61.3) scale(19.0,14.6)"/><path d="M366,730 L366,805 L318,818 Z" fill="#84d47c"/><path d="M366,752 L366,772 L322,812 Z" fill="#a9d879" opacity="0.8"/><path d="M284,735 C292,760 300,785 306,810 L316,808 C306,782 296,757 284,735Z" fill="#86cf76"/><path d="M297.5,709 L302,805 L310,805Z" fill="#a3c96c"/><path d="M314,713 L306,808 L318,808Z" fill="#8fcd6f"/><path d="M333.5,719 C329,748 324,778 315,809 L327,808 C331,780 334,750 333.5,719Z" fill="#36c6b5"/><path d="M282,788 C300,797 316,815 328,845 L317,854 C305,830 292,816 280,808Z" fill="#33c8b3"/></g></svg>
<div style="left:794px;top:156px;width:135px;height:338px;background:#535353;border-radius:3px 3px 0 0"></div>
<div style="left:794px;top:156px;width:135px;height:13px;background:#424242;border-radius:3px 3px 0 0"></div>
<svg style="left:0;top:0" width="940" height="500"><path d="M902 160 L905 163 L902 166 Z M906 160 L909 163 L906 166 Z" fill="#c8c8c8"/><path d="M919 160 L925 166 M925 160 L919 166" stroke="#d0d0d0" stroke-width="1.5"/></svg>
<div style="left:794px;top:306px;width:135px;height:2px;background:#454545;"></div>
<div style="left:794px;top:343px;width:135px;height:2px;background:#454545;"></div>
<div style="left:794px;top:381px;width:135px;height:2px;background:#454545;"></div>
<div style="left:799px;top:418px;width:125px;height:20px;background:#383838;"></div>
<div class="t" style="left:828px;top:187px;font-size:9px;color:#e0e0e0;font-weight:700;letter-spacing:-0.15px">History</div>
<div class="t" style="left:828px;top:212px;font-size:9px;color:#e0e0e0;font-weight:700;letter-spacing:-0.15px">Clone Source</div>
<div class="t" style="left:828px;top:238px;font-size:9px;color:#e0e0e0;font-weight:700;letter-spacing:-0.15px">Character</div>
<div class="t" style="left:828px;top:263px;font-size:9px;color:#e0e0e0;font-weight:700;letter-spacing:-0.15px">Paragraph</div>
<div class="t" style="left:828px;top:288px;font-size:9px;color:#e0e0e0;font-weight:700;letter-spacing:-0.15px">Brush Presets</div>
<div class="t" style="left:828px;top:325px;font-size:9px;color:#e0e0e0;font-weight:700;letter-spacing:-0.15px">Brush</div>
<div class="t" style="left:828px;top:362px;font-size:9px;color:#e0e0e0;font-weight:700;letter-spacing:-0.15px">Paths</div>
<div class="t" style="left:828px;top:400px;font-size:9px;color:#e0e0e0;font-weight:700;letter-spacing:-0.15px">Layers</div>
<div class="t" style="left:828px;top:425px;font-size:9px;color:#e0e0e0;font-weight:700;letter-spacing:-0.15px">Channels</div>
<div class="t" style="left:828px;top:450px;font-size:9px;color:#e0e0e0;font-weight:700;letter-spacing:-0.15px">Properties</div>
<div class="t" style="left:828px;top:476px;font-size:9px;color:#e0e0e0;font-weight:700;letter-spacing:-0.15px">Adjustments</div>
<svg style="left:0;top:0" width="1920" height="1080"><rect x="804" y="183" width="4" height="3" fill="none" stroke="#d8d8d8" stroke-width="0.9"/><rect x="804" y="188" width="4" height="3" fill="#d8d8d8"/><rect x="804" y="193" width="4" height="3" fill="#d8d8d8"/><path d="M812,184 Q818,186 816,191 Q815,195 812,196" fill="none" stroke="#d8d8d8" stroke-width="1.5"/><path d="M810,182 L814,182 L812,186Z" fill="#d8d8d8"/><path d="M803,209.5 h3 M803,212 h3 M803,214.5 h3" stroke="#d8d8d8" stroke-width="1"/><path d="M806,209.5 h2 M806,212 h2" stroke="#d8d8d8" stroke-width="0.6"/><circle cx="814" cy="211" r="2.8" fill="#d8d8d8"/><rect x="808.5" y="215" width="11" height="3.5" rx="1" fill="#d8d8d8"/><rect x="809" y="219.5" width="10" height="1.2" fill="#d8d8d8"/><path d="M804,246 L808,235.5 L812,246 M805.5,242.5 H810.5" fill="none" stroke="#d8d8d8" stroke-width="1.3"/><line x1="818.5" y1="234" x2="818.5" y2="248" stroke="#d8d8d8" stroke-width="1"/><path d="M813,260 H810 A3,3 0 0 0 810,266 H813 Z" fill="#d8d8d8"/><path d="M813,260 V272 M816,260 V272 M810,260 H817" stroke="#d8d8d8" stroke-width="1.3" fill="none"/><ellipse cx="806" cy="287" rx="3" ry="2" fill="#d8d8d8"/><path d="M809,287 H820 M803,294 H813" stroke="#d8d8d8" stroke-width="1.2"/><path d="M813,294 L819,291 L819,297Z" fill="#d8d8d8"/><rect x="808" y="326" width="7" height="9" fill="#d8d8d8"/><path d="M810,326 L807,319 M811.5,326 L811.5,318 M813,326 L816,320" stroke="#d8d8d8" stroke-width="1.3"/><circle cx="807" cy="320" r="1.5" fill="#d8d8d8"/><circle cx="816" cy="320" r="1.5" fill="#d8d8d8"/><path d="M805,361 Q812,356 819,361 M806,361 L807,370 M818,361 L817,370" fill="none" stroke="#d8d8d8" stroke-width="1.1"/><rect x="803.5" y="359.5" width="3" height="3" fill="#d8d8d8"/><rect x="817.5" y="359.5" width="3" height="3" fill="#d8d8d8"/><rect x="805.5" y="369.5" width="3" height="3" fill="none" stroke="#d8d8d8" stroke-width="0.9"/><rect x="815.5" y="369.5" width="3" height="3" fill="none" stroke="#d8d8d8" stroke-width="0.9"/><path d="M805,400 L812,396 L819,400 L812,404Z" fill="#d8d8d8"/><path d="M805,403 L812,407 L819,403 M805,406 L812,410 L819,406" fill="none" stroke="#d8d8d8" stroke-width="1.5"/><circle cx="812" cy="425" r="4.5" fill="#9a9a9a"/><circle cx="809" cy="430.5" r="4.5" fill="#d8d8d8" opacity="0.85"/><circle cx="815" cy="430.5" r="4.5" fill="#d8d8d8" opacity="0.85"/><circle cx="812" cy="428.5" r="1.8" fill="#333"/><circle cx="808" cy="449" r="3.2" fill="none" stroke="#d8d8d8" stroke-width="1.2"/><rect x="814" y="446" width="5" height="3" fill="#d8d8d8"/><rect x="814" y="451" width="5" height="3" fill="#d8d8d8"/><rect x="804" y="456" width="15" height="2.5" fill="#d8d8d8"/><circle cx="812" cy="479" r="6" fill="none" stroke="#d8d8d8" stroke-width="1.6"/><path d="M816.2,474.8 A6,6 0 0 1 807.8,483.2 Z" fill="#d8d8d8"/><line x1="850" y1="160" x2="872" y2="160" stroke="#5e5e5e" stroke-width="1"/><line x1="850" y1="310" x2="872" y2="310" stroke="#5e5e5e" stroke-width="1"/><line x1="850" y1="347" x2="872" y2="347" stroke="#5e5e5e" stroke-width="1"/><line x1="850" y1="385" x2="872" y2="385" stroke="#5e5e5e" stroke-width="1"/></svg>
<div style="left:574px;top:381px;width:219px;height:397px;background:#535353;"></div>
<div style="left:574px;top:381px;width:219px;height:27px;background:#424242;"></div>
<div style="left:610px;top:383px;width:54px;height:25px;background:#535353;"></div>
<div class="t" style="left:583px;top:391px;font-size:9px;color:#a0a0a0;font-weight:700;letter-spacing:-0.2px;width:27px;overflow:hidden">Layers</div>
<div class="t" style="left:617px;top:391px;font-size:9px;color:#e8e8e8;font-weight:700;">Channels</div>
<div class="t" style="left:672px;top:391px;font-size:9px;color:#a8a8a8;font-weight:700;letter-spacing:-0.1px">Prope</div>
<div class="t" style="left:707px;top:391px;font-size:9px;color:#a8a8a8;font-weight:700;letter-spacing:-0.1px">Adjust</div>
<svg style="left:0;top:0" width="800" height="400"><path d="M756,391 L759.5,394.5 L756,398 M760.5,391 L764,394.5 L760.5,398" fill="none" stroke="#d8d8d8" stroke-width="1.4"/></svg>
<div style="left:770px;top:389px;width:1px;height:12px;background:#888;"></div>
<svg style="left:0;top:0" width="800" height="800"><path d="M778 391.5 h9 M778 394.5 h9 M778 397.5 h9" stroke="#c8c8c8" stroke-width="1.2"/></svg>
<div style="left:574px;top:411px;width:204px;height:34px;background:#535353;"></div>
<div style="left:574px;top:444px;width:204px;height:1px;background:#474747;"></div>
<div class="t" style="left:632px;top:424px;font-size:8.5px;color:#d8d8d8;font-weight:400;">CMYK</div>
<div class="t" style="left:739px;top:424px;font-size:8.5px;color:#d8d8d8;font-weight:400;">Ctrl+2</div>
<div style="left:574px;top:445px;width:204px;height:34px;background:#535353;"></div>
<div style="left:574px;top:478px;width:204px;height:1px;background:#474747;"></div>
<div class="t" style="left:632px;top:458px;font-size:8.5px;color:#d8d8d8;font-weight:400;">Cyan</div>
<div class="t" style="left:739px;top:458px;font-size:8.5px;color:#d8d8d8;font-weight:400;">Ctrl+3</div>
<div style="left:574px;top:478px;width:204px;height:34px;background:#535353;"></div>
<div style="left:574px;top:511px;width:204px;height:1px;background:#474747;"></div>
<div class="t" style="left:632px;top:491px;font-size:8.5px;color:#d8d8d8;font-weight:400;">Magenta</div>
<div class="t" style="left:739px;top:491px;font-size:8.5px;color:#d8d8d8;font-weight:400;">Ctrl+4</div>
<div style="left:574px;top:512px;width:204px;height:34px;background:#535353;"></div>
<div style="left:574px;top:545px;width:204px;height:1px;background:#474747;"></div>
<div class="t" style="left:632px;top:525px;font-size:8.5px;color:#d8d8d8;font-weight:400;">Yellow</div>
<div class="t" style="left:739px;top:525px;font-size:8.5px;color:#d8d8d8;font-weight:400;">Ctrl+5</div>
<div style="left:574px;top:545px;width:204px;height:34px;background:#535353;"></div>
<div style="left:574px;top:578px;width:204px;height:1px;background:#474747;"></div>
<div class="t" style="left:632px;top:558px;font-size:8.5px;color:#d8d8d8;font-weight:400;">Black</div>
<div class="t" style="left:739px;top:558px;font-size:8.5px;color:#d8d8d8;font-weight:400;">Ctrl+6</div>
<div style="left:574px;top:579px;width:204px;height:34px;background:#6a6a6a;"></div>
<div style="left:574px;top:612px;width:204px;height:1px;background:#474747;"></div>
<div class="t" style="left:632px;top:592px;font-size:8.5px;color:#d8d8d8;font-weight:400;">N</div>
<div class="t" style="left:739px;top:592px;font-size:8.5px;color:#d8d8d8;font-weight:400;">Ctrl+7</div>
<svg style="left:0;top:0" width="800" height="800"><defs><pattern id="nz" width="28" height="27" patternUnits="userSpaceOnUse"><rect width="28" height="27" fill="#f2f2f2"/><rect x="6.4" y="14.1" width="1.5" height="2" fill="#222"/><rect x="16.9" y="1.7" width="1" height="2" fill="#222"/><rect x="7.0" y="6.1" width="2" height="2" fill="#222"/><rect x="10.7" y="22.4" width="1" height="1" fill="#222"/><rect x="23.4" y="13.6" width="1" height="1" fill="#222"/><rect x="4.3" y="24.9" width="1" height="1.5" fill="#222"/><rect x="21.1" y="21.4" width="1.5" height="2" fill="#222"/><rect x="16.1" y="23.9" width="2" height="2" fill="#222"/><rect x="10.7" y="20.8" width="2" height="1" fill="#222"/><rect x="23.7" y="2.5" width="1" height="2" fill="#222"/><rect x="5.9" y="25.1" width="2" height="1.5" fill="#222"/><rect x="11.4" y="21.7" width="1.5" height="2" fill="#222"/><rect x="15.8" y="23.5" width="1" height="1.5" fill="#222"/><rect x="26.8" y="17.5" width="1" height="1.5" fill="#222"/><rect x="26.0" y="23.5" width="1" height="1" fill="#222"/><rect x="17.1" y="25.7" width="1.5" height="1.5" fill="#222"/><rect x="3.4" y="12.5" width="2" height="1" fill="#222"/><rect x="9.3" y="1.7" width="1" height="1" fill="#222"/><rect x="7.9" y="20.0" width="1" height="1" fill="#222"/><rect x="16.3" y="19.8" width="2" height="1.5" fill="#222"/><rect x="14.9" y="24.0" width="1.5" height="1" fill="#222"/><rect x="27.0" y="8.1" width="1" height="1" fill="#222"/><rect x="16.2" y="0.8" width="1" height="2" fill="#222"/><rect x="7.9" y="6.8" width="1" height="1.5" fill="#222"/><rect x="8.5" y="24.9" width="2" height="2" fill="#222"/><rect x="12.4" y="13.5" width="1" height="1.5" fill="#222"/><rect x="11.6" y="18.7" width="1" height="1.5" fill="#222"/><rect x="11.8" y="6.7" width="1.5" height="1.5" fill="#222"/><rect x="0.3" y="10.8" width="1.5" height="1" fill="#222"/><rect x="10.2" y="15.3" width="1" height="1" fill="#222"/><rect x="17.1" y="8.6" width="1.5" height="1.5" fill="#222"/><rect x="16.4" y="7.3" width="2" height="1" fill="#222"/><rect x="15.9" y="24.8" width="1" height="1.5" fill="#222"/><rect x="6.8" y="11.9" width="1.5" height="1" fill="#222"/><rect x="9.8" y="8.1" width="1.5" height="1.5" fill="#222"/><rect x="8.1" y="9.8" width="1" height="1" fill="#222"/><rect x="8.4" y="5.8" width="1.5" height="1" fill="#222"/><rect x="8.9" y="17.6" width="1" height="1" fill="#222"/><rect x="16.2" y="24.7" width="1" height="2" fill="#222"/><rect x="21.9" y="25.0" width="1" height="1.5" fill="#222"/><rect x="20.0" y="5.7" width="2" height="1.5" fill="#222"/><rect x="6.1" y="3.1" width="1" height="1.5" fill="#222"/><rect x="21.8" y="21.8" width="1" height="1.5" fill="#222"/><rect x="9.2" y="21.5" width="1" height="1.5" fill="#222"/><rect x="15.9" y="11.0" width="1.5" height="2" fill="#222"/><rect x="9.4" y="10.8" width="2" height="2" fill="#222"/><rect x="1.0" y="10.7" width="1" height="1" fill="#222"/><rect x="12.9" y="21.6" width="2" height="1" fill="#222"/><rect x="0.9" y="11.9" width="1.5" height="1.5" fill="#222"/><rect x="24.0" y="22.4" width="1.5" height="1" fill="#222"/><rect x="21.9" y="1.2" width="1" height="2" fill="#222"/><rect x="15.6" y="0.3" width="1" height="1" fill="#222"/><rect x="13.6" y="6.2" width="1" height="2" fill="#222"/><rect x="1.4" y="23.7" width="1" height="1.5" fill="#222"/><rect x="3.4" y="25.3" width="2" height="1" fill="#222"/><rect x="9.5" y="5.1" width="1" height="1" fill="#222"/><rect x="6.5" y="7.1" width="1" height="1" fill="#222"/><rect x="13.2" y="14.8" width="2" height="1" fill="#222"/><rect x="20.4" y="6.5" width="2" height="1" fill="#222"/><rect x="12.8" y="20.2" width="1" height="1" fill="#222"/><rect x="20.9" y="1.2" width="1" height="1" fill="#222"/><rect x="13.0" y="0.9" width="1" height="2" fill="#222"/><rect x="8.5" y="8.2" width="1.5" height="2" fill="#222"/><rect x="17.5" y="15.3" width="1.5" height="1.5" fill="#222"/><rect x="5.2" y="8.5" width="1" height="1" fill="#222"/><rect x="15.0" y="18.6" width="2" height="1" fill="#222"/><rect x="15.3" y="1.1" width="2" height="2" fill="#222"/><rect x="17.2" y="1.1" width="2" height="1" fill="#222"/><rect x="10.1" y="12.9" width="1.5" height="2" fill="#222"/><rect x="25.7" y="10.9" width="1" height="1" fill="#222"/><rect x="5.9" y="7.0" width="1" height="1" fill="#888"/><rect x="15.9" y="20.9" width="1" height="1" fill="#888"/><rect x="6.1" y="3.4" width="1" height="1" fill="#888"/><rect x="0.8" y="8.5" width="1" height="1" fill="#888"/><rect x="26.2" y="14.5" width="1" height="1" fill="#888"/><rect x="23.5" y="3.2" width="1" height="1" fill="#888"/><rect x="18.6" y="24.4" width="1" height="1" fill="#888"/><rect x="19.8" y="22.1" width="1" height="1" fill="#888"/><rect x="14.3" y="9.8" width="1" height="1" fill="#888"/><rect x="2.9" y="8.3" width="1" height="1" fill="#888"/><rect x="14.4" y="21.1" width="1" height="1" fill="#888"/><rect x="19.3" y="12.3" width="1" height="1" fill="#888"/><rect x="6.4" y="10.1" width="1" height="1" fill="#888"/><rect x="14.2" y="14.7" width="1" height="1" fill="#888"/><rect x="17.8" y="9.8" width="1" height="1" fill="#888"/><rect x="22.1" y="8.9" width="1" height="1" fill="#888"/><rect x="23.0" y="0.7" width="1" height="1" fill="#888"/><rect x="3.1" y="12.5" width="1" height="1" fill="#888"/><rect x="18.8" y="7.4" width="1" height="1" fill="#888"/><rect x="8.1" y="2.3" width="1" height="1" fill="#888"/><rect x="26.9" y="14.7" width="1" height="1" fill="#888"/><rect x="14.3" y="6.2" width="1" height="1" fill="#888"/><rect x="15.0" y="2.6" width="1" height="1" fill="#888"/><rect x="14.9" y="14.3" width="1" height="1" fill="#888"/><rect x="23.5" y="4.7" width="1" height="1" fill="#888"/></pattern></defs><rect x="598" y="415" width="28" height="27" fill="url(#nz)"/><path d="M579,428 Q585,422 591,428 Q585,434 579,428Z" fill="none" stroke="#d0d0d0" stroke-width="1.4"/><circle cx="585" cy="428" r="2" fill="#d0d0d0"/><rect x="598" y="449" width="28" height="27" fill="url(#nz)"/><path d="M579,462 Q585,456 591,462 Q585,468 579,462Z" fill="none" stroke="#d0d0d0" stroke-width="1.4"/><circle cx="585" cy="462" r="2" fill="#d0d0d0"/><rect x="598" y="482" width="28" height="27" fill="url(#nz)"/><path d="M579,495 Q585,489 591,495 Q585,501 579,495Z" fill="none" stroke="#d0d0d0" stroke-width="1.4"/><circle cx="585" cy="495" r="2" fill="#d0d0d0"/><rect x="598" y="516" width="28" height="27" fill="url(#nz)"/><path d="M579,529 Q585,523 591,529 Q585,535 579,529Z" fill="none" stroke="#d0d0d0" stroke-width="1.4"/><circle cx="585" cy="529" r="2" fill="#d0d0d0"/><rect x="598" y="549" width="28" height="27" fill="url(#nz)"/><path d="M579,562 Q585,556 591,562 Q585,568 579,562Z" fill="none" stroke="#d0d0d0" stroke-width="1.4"/><circle cx="585" cy="562" r="2" fill="#d0d0d0"/><rect x="598" y="583" width="28" height="27" fill="url(#nz)"/><path d="M579,596 Q585,590 591,596 Q585,602 579,596Z" fill="none" stroke="#d0d0d0" stroke-width="1.4"/><circle cx="585" cy="596" r="2" fill="#d0d0d0"/></svg>
<div style="left:778px;top:408px;width:15px;height:340px;background:#505050;"></div>
<div style="left:574px;top:748px;width:219px;height:1px;background:#3e3e3e;"></div>
<div style="left:574px;top:749px;width:219px;height:21px;background:#535353;"></div>
<div style="left:574px;top:770px;width:219px;height:8px;background:#474747;"></div>
<svg style="left:0;top:0" width="800" height="800"><circle cx="680" cy="759" r="4.5" fill="none" stroke="#c8c8c8" stroke-width="1.2" stroke-dasharray="1.2,1.6"/><rect x="700.5" y="754.5" width="11" height="8" fill="#aaa" stroke="#aaa"/><rect x="703.5" y="756.5" width="5" height="4" fill="#666"/><rect x="730.5" y="755.5" width="9" height="8" fill="none" stroke="#d0d0d0" stroke-width="1.2"/><path d="M733,758 h3 v3" fill="none" stroke="#d0d0d0" stroke-width="1"/><path d="M756.5,755 h9 M758,756 v8 h6 v-8 M760,757 v6 M762,757 v6 M759,755 v-1.5 h4 v1.5" fill="none" stroke="#d0d0d0" stroke-width="1.1"/></svg>
<div style="left:946px;top:0px;width:974px;height:2px;background:#3c3c3c;"></div>
<div style="left:946px;top:2px;width:974px;height:46px;background:#535353;"></div>
<div style="left:946px;top:48px;width:974px;height:40px;background:#424242;"></div>
<div style="left:946px;top:48px;width:52px;height:17px;background:#3c3c3c;"></div>
<div style="left:946px;top:65px;width:52px;height:1015px;background:#535353;"></div>
<div style="left:997px;top:48px;width:3px;height:1032px;background:#3a3a3a;"></div>
<div style="left:1000px;top:88px;width:920px;height:23px;background:#474747;"></div>
<div style="left:1000px;top:88px;width:25px;height:23px;background:#4c4c4c;"></div>
<div style="left:1000px;top:111px;width:25px;height:969px;background:#474747;"></div>
<div style="left:1025px;top:111px;width:895px;height:969px;background:#282828;"></div>
<div style="left:1025px;top:111px;width:895px;height:1px;background:#151515;"></div>
<div style="left:1224px;top:48px;width:2px;height:40px;background:#3a3a3a;"></div>
<div class="t" style="left:1062px;top:19px;font-size:14px;color:#e0e0e0;font-weight:400;letter-spacing:-0.3px">Auto-Select:</div>
<div style="left:1154px;top:13px;width:78px;height:25px;background:#3c3c3c;border-radius:3px;border:1px solid #474747"></div>
<div class="t" style="left:1166px;top:19px;font-size:14px;color:#e8e8e8;font-weight:400;letter-spacing:-0.5px">Layer</div>
<div class="t" style="left:1278px;top:19px;font-size:14px;color:#e0e0e0;font-weight:400;letter-spacing:-0.3px">Show Tr</div>
<svg style="left:0;top:0" width="1920" height="60"><rect x="1040.5" y="16.5" width="14" height="14" rx="3" fill="#4a4a4a" stroke="#707070"/><rect x="1257.5" y="16.5" width="14" height="14" rx="3" fill="#4a4a4a" stroke="#707070"/><path d="M1217 22 L1222 27 L1227 22" fill="none" stroke="#d0d0d0" stroke-width="1.5"/><path d="M1009 24 L1013.5 28.5 L1018 24" fill="none" stroke="#a0a0a0" stroke-width="1.3"/><line x1="1032.5" y1="9" x2="1032.5" y2="40" stroke="#474747" stroke-width="1.5"/><line x1="1244.5" y1="9" x2="1244.5" y2="40" stroke="#474747" stroke-width="1.5"/></svg>
<div class="t" style="left:1002px;top:62px;font-size:15px;color:#bcbcbc;font-weight:700;letter-spacing:-0.4px">eco_veika_inverzni_k copy</div>
<div class="t" style="left:1199.5px;top:60.5px;font-size:17px;color:#d0d0d0;font-weight:700;">&#215;</div>
<div class="t" style="left:1239px;top:62px;font-size:15px;color:#bcbcbc;font-weight:700;letter-spacing:0.1px">Untitled-1 @</div>
<svg style="left:0;top:0" width="1920" height="60"><g fill="#b4b4b4" stroke="#b4b4b4"><rect x="1722" y="15.5" width="20" height="1.5" stroke="none"/><rect x="1728" y="17" width="7" height="5.5" stroke="none"/><rect x="1722" y="24" width="20" height="1.5" stroke="none"/><rect x="1725.6" y="25.5" width="12.7" height="5.5" stroke="none"/><rect x="1757.4" y="18" width="20" height="1.5" stroke="none"/><rect x="1764" y="15.6" width="6.7" height="7" stroke="none"/><rect x="1757.4" y="28.2" width="20" height="1.5" stroke="none"/><rect x="1761" y="25.7" width="13" height="6.3" stroke="none"/><rect x="1800" y="15.6" width="7" height="6.4" stroke="none"/><rect x="1793.6" y="21.3" width="20" height="1.5" stroke="none"/><rect x="1797" y="25.7" width="12.5" height="5" stroke="none"/><rect x="1793.6" y="31" width="20" height="1.5" stroke="none"/><rect x="1843" y="10.3" width="1.5" height="23.4" stroke="none"/><rect x="1844" y="17.2" width="5.4" height="11.8" stroke="none"/><rect x="1851" y="10.3" width="1.5" height="23.4" stroke="none"/><rect x="1852" y="19.9" width="6" height="6.9" stroke="none"/><rect x="1879" y="17.7" width="6.5" height="12.7" stroke="none"/><rect x="1881.2" y="12.4" width="1.5" height="22.4" stroke="none"/><rect x="1889.6" y="10.3" width="1.5" height="24.5" stroke="none"/><rect x="1887" y="20.4" width="6.5" height="6.9" stroke="none"/><rect x="1914.7" y="16.7" width="6" height="12.7" stroke="none"/></g></svg>
<div class="t" style="left:1720px;top:62px;font-size:15px;color:#bcbcbc;font-weight:700;letter-spacing:-0.1px">06631-Renzo-Lapis-Schum-D</div>
<svg style="left:0;top:0" width="1920" height="1080"><line x1="1031.5" y1="108" x2="1031.5" y2="111" stroke="#777" stroke-width="1"/><line x1="1039.2" y1="108" x2="1039.2" y2="111" stroke="#777" stroke-width="1"/><line x1="1046.8" y1="108" x2="1046.8" y2="111" stroke="#777" stroke-width="1"/><line x1="1054.5" y1="105" x2="1054.5" y2="111" stroke="#777" stroke-width="1"/><line x1="1062.2" y1="108" x2="1062.2" y2="111" stroke="#777" stroke-width="1"/><line x1="1069.8" y1="108" x2="1069.8" y2="111" stroke="#777" stroke-width="1"/><line x1="1077.5" y1="108" x2="1077.5" y2="111" stroke="#777" stroke-width="1"/><line x1="1085.1" y1="108" x2="1085.1" y2="111" stroke="#777" stroke-width="1"/><line x1="1092.8" y1="89" x2="1092.8" y2="111" stroke="#777" stroke-width="1"/><text x="1096.8" y="107" font-size="13.5" fill="#b4b4b4" font-family="Liberation Sans">280</text><line x1="1100.5" y1="108" x2="1100.5" y2="111" stroke="#777" stroke-width="1"/><line x1="1108.1" y1="108" x2="1108.1" y2="111" stroke="#777" stroke-width="1"/><line x1="1115.8" y1="108" x2="1115.8" y2="111" stroke="#777" stroke-width="1"/><line x1="1123.4" y1="108" x2="1123.4" y2="111" stroke="#777" stroke-width="1"/><line x1="1131.1" y1="105" x2="1131.1" y2="111" stroke="#777" stroke-width="1"/><line x1="1138.8" y1="108" x2="1138.8" y2="111" stroke="#777" stroke-width="1"/><line x1="1146.4" y1="108" x2="1146.4" y2="111" stroke="#777" stroke-width="1"/><line x1="1154.1" y1="108" x2="1154.1" y2="111" stroke="#777" stroke-width="1"/><line x1="1161.7" y1="108" x2="1161.7" y2="111" stroke="#777" stroke-width="1"/><line x1="1169.4" y1="89" x2="1169.4" y2="111" stroke="#777" stroke-width="1"/><text x="1173.4" y="107" font-size="13.5" fill="#b4b4b4" font-family="Liberation Sans">260</text><line x1="1177.1" y1="108" x2="1177.1" y2="111" stroke="#777" stroke-width="1"/><line x1="1184.7" y1="108" x2="1184.7" y2="111" stroke="#777" stroke-width="1"/><line x1="1192.4" y1="108" x2="1192.4" y2="111" stroke="#777" stroke-width="1"/><line x1="1200.0" y1="108" x2="1200.0" y2="111" stroke="#777" stroke-width="1"/><line x1="1207.7" y1="105" x2="1207.7" y2="111" stroke="#777" stroke-width="1"/><line x1="1215.4" y1="108" x2="1215.4" y2="111" stroke="#777" stroke-width="1"/><line x1="1223.0" y1="108" x2="1223.0" y2="111" stroke="#777" stroke-width="1"/><line x1="1230.7" y1="108" x2="1230.7" y2="111" stroke="#777" stroke-width="1"/><line x1="1238.3" y1="108" x2="1238.3" y2="111" stroke="#777" stroke-width="1"/><line x1="1246.0" y1="89" x2="1246.0" y2="111" stroke="#777" stroke-width="1"/><text x="1250.0" y="107" font-size="13.5" fill="#b4b4b4" font-family="Liberation Sans">240</text><line x1="1253.7" y1="108" x2="1253.7" y2="111" stroke="#777" stroke-width="1"/><line x1="1261.3" y1="108" x2="1261.3" y2="111" stroke="#777" stroke-width="1"/><line x1="1269.0" y1="108" x2="1269.0" y2="111" stroke="#777" stroke-width="1"/><line x1="1276.6" y1="108" x2="1276.6" y2="111" stroke="#777" stroke-width="1"/><line x1="1284.3" y1="105" x2="1284.3" y2="111" stroke="#777" stroke-width="1"/><line x1="1292.0" y1="108" x2="1292.0" y2="111" stroke="#777" stroke-width="1"/><line x1="1299.6" y1="108" x2="1299.6" y2="111" stroke="#777" stroke-width="1"/><line x1="1307.3" y1="108" x2="1307.3" y2="111" stroke="#777" stroke-width="1"/><line x1="1314.9" y1="108" x2="1314.9" y2="111" stroke="#777" stroke-width="1"/><line x1="1322.6" y1="89" x2="1322.6" y2="111" stroke="#777" stroke-width="1"/><text x="1326.6" y="107" font-size="13.5" fill="#b4b4b4" font-family="Liberation Sans">220</text><line x1="1330.3" y1="108" x2="1330.3" y2="111" stroke="#777" stroke-width="1"/><line x1="1337.9" y1="108" x2="1337.9" y2="111" stroke="#777" stroke-width="1"/><line x1="1345.6" y1="108" x2="1345.6" y2="111" stroke="#777" stroke-width="1"/><line x1="1353.2" y1="108" x2="1353.2" y2="111" stroke="#777" stroke-width="1"/><line x1="1360.9" y1="105" x2="1360.9" y2="111" stroke="#777" stroke-width="1"/><line x1="1368.6" y1="108" x2="1368.6" y2="111" stroke="#777" stroke-width="1"/><line x1="1376.2" y1="108" x2="1376.2" y2="111" stroke="#777" stroke-width="1"/><line x1="1383.9" y1="108" x2="1383.9" y2="111" stroke="#777" stroke-width="1"/><line x1="1391.5" y1="108" x2="1391.5" y2="111" stroke="#777" stroke-width="1"/><line x1="1399.2" y1="89" x2="1399.2" y2="111" stroke="#777" stroke-width="1"/><text x="1403.2" y="107" font-size="13.5" fill="#b4b4b4" font-family="Liberation Sans">200</text><line x1="1406.9" y1="108" x2="1406.9" y2="111" stroke="#777" stroke-width="1"/><line x1="1414.5" y1="108" x2="1414.5" y2="111" stroke="#777" stroke-width="1"/><line x1="1422.2" y1="108" x2="1422.2" y2="111" stroke="#777" stroke-width="1"/><line x1="1429.8" y1="108" x2="1429.8" y2="111" stroke="#777" stroke-width="1"/><line x1="1437.5" y1="105" x2="1437.5" y2="111" stroke="#777" stroke-width="1"/><line x1="1445.2" y1="108" x2="1445.2" y2="111" stroke="#777" stroke-width="1"/><line x1="1452.8" y1="108" x2="1452.8" y2="111" stroke="#777" stroke-width="1"/><line x1="1460.5" y1="108" x2="1460.5" y2="111" stroke="#777" stroke-width="1"/><line x1="1468.1" y1="108" x2="1468.1" y2="111" stroke="#777" stroke-width="1"/><line x1="1475.8" y1="89" x2="1475.8" y2="111" stroke="#777" stroke-width="1"/><text x="1479.8" y="107" font-size="13.5" fill="#b4b4b4" font-family="Liberation Sans">180</text><line x1="1483.5" y1="108" x2="1483.5" y2="111" stroke="#777" stroke-width="1"/><line x1="1491.1" y1="108" x2="1491.1" y2="111" stroke="#777" stroke-width="1"/><line x1="1498.8" y1="108" x2="1498.8" y2="111" stroke="#777" stroke-width="1"/><line x1="1506.4" y1="108" x2="1506.4" y2="111" stroke="#777" stroke-width="1"/><line x1="1514.1" y1="105" x2="1514.1" y2="111" stroke="#777" stroke-width="1"/><line x1="1521.8" y1="108" x2="1521.8" y2="111" stroke="#777" stroke-width="1"/><line x1="1529.4" y1="108" x2="1529.4" y2="111" stroke="#777" stroke-width="1"/><line x1="1537.1" y1="108" x2="1537.1" y2="111" stroke="#777" stroke-width="1"/><line x1="1544.7" y1="108" x2="1544.7" y2="111" stroke="#777" stroke-width="1"/><line x1="1552.4" y1="89" x2="1552.4" y2="111" stroke="#777" stroke-width="1"/><text x="1556.4" y="107" font-size="13.5" fill="#b4b4b4" font-family="Liberation Sans">160</text><line x1="1560.1" y1="108" x2="1560.1" y2="111" stroke="#777" stroke-width="1"/><line x1="1567.7" y1="108" x2="1567.7" y2="111" stroke="#777" stroke-width="1"/><line x1="1575.4" y1="108" x2="1575.4" y2="111" stroke="#777" stroke-width="1"/><line x1="1583.0" y1="108" x2="1583.0" y2="111" stroke="#777" stroke-width="1"/><line x1="1590.7" y1="105" x2="1590.7" y2="111" stroke="#777" stroke-width="1"/><line x1="1598.4" y1="108" x2="1598.4" y2="111" stroke="#777" stroke-width="1"/><line x1="1606.0" y1="108" x2="1606.0" y2="111" stroke="#777" stroke-width="1"/><line x1="1613.7" y1="108" x2="1613.7" y2="111" stroke="#777" stroke-width="1"/><line x1="1621.3" y1="108" x2="1621.3" y2="111" stroke="#777" stroke-width="1"/><line x1="1629.0" y1="89" x2="1629.0" y2="111" stroke="#777" stroke-width="1"/><text x="1633.0" y="107" font-size="13.5" fill="#b4b4b4" font-family="Liberation Sans">140</text><line x1="1636.7" y1="108" x2="1636.7" y2="111" stroke="#777" stroke-width="1"/><line x1="1644.3" y1="108" x2="1644.3" y2="111" stroke="#777" stroke-width="1"/><line x1="1652.0" y1="108" x2="1652.0" y2="111" stroke="#777" stroke-width="1"/><line x1="1659.6" y1="108" x2="1659.6" y2="111" stroke="#777" stroke-width="1"/><line x1="1667.3" y1="105" x2="1667.3" y2="111" stroke="#777" stroke-width="1"/><line x1="1675.0" y1="108" x2="1675.0" y2="111" stroke="#777" stroke-width="1"/><line x1="1682.6" y1="108" x2="1682.6" y2="111" stroke="#777" stroke-width="1"/><line x1="1690.3" y1="108" x2="1690.3" y2="111" stroke="#777" stroke-width="1"/><line x1="1697.9" y1="108" x2="1697.9" y2="111" stroke="#777" stroke-width="1"/><line x1="1705.6" y1="89" x2="1705.6" y2="111" stroke="#777" stroke-width="1"/><text x="1709.6" y="107" font-size="13.5" fill="#b4b4b4" font-family="Liberation Sans">120</text><line x1="1713.3" y1="108" x2="1713.3" y2="111" stroke="#777" stroke-width="1"/><line x1="1720.9" y1="108" x2="1720.9" y2="111" stroke="#777" stroke-width="1"/><line x1="1728.6" y1="108" x2="1728.6" y2="111" stroke="#777" stroke-width="1"/><line x1="1736.2" y1="108" x2="1736.2" y2="111" stroke="#777" stroke-width="1"/><line x1="1743.9" y1="105" x2="1743.9" y2="111" stroke="#777" stroke-width="1"/><line x1="1751.6" y1="108" x2="1751.6" y2="111" stroke="#777" stroke-width="1"/><line x1="1759.2" y1="108" x2="1759.2" y2="111" stroke="#777" stroke-width="1"/><line x1="1766.9" y1="108" x2="1766.9" y2="111" stroke="#777" stroke-width="1"/><line x1="1774.5" y1="108" x2="1774.5" y2="111" stroke="#777" stroke-width="1"/><line x1="1782.2" y1="89" x2="1782.2" y2="111" stroke="#777" stroke-width="1"/><text x="1786.2" y="107" font-size="13.5" fill="#b4b4b4" font-family="Liberation Sans">100</text><line x1="1789.9" y1="108" x2="1789.9" y2="111" stroke="#777" stroke-width="1"/><line x1="1797.5" y1="108" x2="1797.5" y2="111" stroke="#777" stroke-width="1"/><line x1="1805.2" y1="108" x2="1805.2" y2="111" stroke="#777" stroke-width="1"/><line x1="1812.8" y1="108" x2="1812.8" y2="111" stroke="#777" stroke-width="1"/><line x1="1820.5" y1="105" x2="1820.5" y2="111" stroke="#777" stroke-width="1"/><line x1="1828.2" y1="108" x2="1828.2" y2="111" stroke="#777" stroke-width="1"/><line x1="1835.8" y1="108" x2="1835.8" y2="111" stroke="#777" stroke-width="1"/><line x1="1843.5" y1="108" x2="1843.5" y2="111" stroke="#777" stroke-width="1"/><line x1="1851.1" y1="108" x2="1851.1" y2="111" stroke="#777" stroke-width="1"/><line x1="1858.8" y1="89" x2="1858.8" y2="111" stroke="#777" stroke-width="1"/><text x="1862.8" y="107" font-size="13.5" fill="#b4b4b4" font-family="Liberation Sans">80</text><line x1="1866.5" y1="108" x2="1866.5" y2="111" stroke="#777" stroke-width="1"/><line x1="1874.1" y1="108" x2="1874.1" y2="111" stroke="#777" stroke-width="1"/><line x1="1881.8" y1="108" x2="1881.8" y2="111" stroke="#777" stroke-width="1"/><line x1="1889.4" y1="108" x2="1889.4" y2="111" stroke="#777" stroke-width="1"/><line x1="1897.1" y1="105" x2="1897.1" y2="111" stroke="#777" stroke-width="1"/><line x1="1904.8" y1="108" x2="1904.8" y2="111" stroke="#777" stroke-width="1"/><line x1="1912.4" y1="108" x2="1912.4" y2="111" stroke="#777" stroke-width="1"/><line x1="1001" y1="112.0" x2="1025" y2="112.0" stroke="#777" stroke-width="1"/><text x="1005" y="126.0" font-size="13" fill="#a8a8a8" font-family="Liberation Sans">8</text><text x="1005" y="140.0" font-size="13" fill="#a8a8a8" font-family="Liberation Sans">0</text><line x1="1021" y1="119.6" x2="1025" y2="119.6" stroke="#777" stroke-width="1"/><line x1="1021" y1="127.3" x2="1025" y2="127.3" stroke="#777" stroke-width="1"/><line x1="1021" y1="134.9" x2="1025" y2="134.9" stroke="#777" stroke-width="1"/><line x1="1021" y1="142.6" x2="1025" y2="142.6" stroke="#777" stroke-width="1"/><line x1="1018" y1="150.2" x2="1025" y2="150.2" stroke="#777" stroke-width="1"/><line x1="1021" y1="157.8" x2="1025" y2="157.8" stroke="#777" stroke-width="1"/><line x1="1021" y1="165.5" x2="1025" y2="165.5" stroke="#777" stroke-width="1"/><line x1="1021" y1="173.1" x2="1025" y2="173.1" stroke="#777" stroke-width="1"/><line x1="1021" y1="180.8" x2="1025" y2="180.8" stroke="#777" stroke-width="1"/><line x1="1001" y1="188.4" x2="1025" y2="188.4" stroke="#777" stroke-width="1"/><text x="1005" y="202.4" font-size="13" fill="#a8a8a8" font-family="Liberation Sans">6</text><text x="1005" y="216.4" font-size="13" fill="#a8a8a8" font-family="Liberation Sans">0</text><line x1="1021" y1="196.0" x2="1025" y2="196.0" stroke="#777" stroke-width="1"/><line x1="1021" y1="203.7" x2="1025" y2="203.7" stroke="#777" stroke-width="1"/><line x1="1021" y1="211.3" x2="1025" y2="211.3" stroke="#777" stroke-width="1"/><line x1="1021" y1="219.0" x2="1025" y2="219.0" stroke="#777" stroke-width="1"/><line x1="1018" y1="226.6" x2="1025" y2="226.6" stroke="#777" stroke-width="1"/><line x1="1021" y1="234.2" x2="1025" y2="234.2" stroke="#777" stroke-width="1"/><line x1="1021" y1="241.9" x2="1025" y2="241.9" stroke="#777" stroke-width="1"/><line x1="1021" y1="249.5" x2="1025" y2="249.5" stroke="#777" stroke-width="1"/><line x1="1021" y1="257.2" x2="1025" y2="257.2" stroke="#777" stroke-width="1"/><line x1="1001" y1="264.8" x2="1025" y2="264.8" stroke="#777" stroke-width="1"/><text x="1005" y="278.8" font-size="13" fill="#a8a8a8" font-family="Liberation Sans">4</text><text x="1005" y="292.8" font-size="13" fill="#a8a8a8" font-family="Liberation Sans">0</text><line x1="1021" y1="272.4" x2="1025" y2="272.4" stroke="#777" stroke-width="1"/><line x1="1021" y1="280.1" x2="1025" y2="280.1" stroke="#777" stroke-width="1"/><line x1="1021" y1="287.7" x2="1025" y2="287.7" stroke="#777" stroke-width="1"/><line x1="1021" y1="295.4" x2="1025" y2="295.4" stroke="#777" stroke-width="1"/><line x1="1018" y1="303.0" x2="1025" y2="303.0" stroke="#777" stroke-width="1"/><line x1="1021" y1="310.6" x2="1025" y2="310.6" stroke="#777" stroke-width="1"/><line x1="1021" y1="318.3" x2="1025" y2="318.3" stroke="#777" stroke-width="1"/><line x1="1021" y1="325.9" x2="1025" y2="325.9" stroke="#777" stroke-width="1"/><line x1="1021" y1="333.6" x2="1025" y2="333.6" stroke="#777" stroke-width="1"/><line x1="1001" y1="341.2" x2="1025" y2="341.2" stroke="#777" stroke-width="1"/><text x="1005" y="355.2" font-size="13" fill="#a8a8a8" font-family="Liberation Sans">2</text><text x="1005" y="369.2" font-size="13" fill="#a8a8a8" font-family="Liberation Sans">0</text><line x1="1021" y1="348.8" x2="1025" y2="348.8" stroke="#777" stroke-width="1"/><line x1="1021" y1="356.5" x2="1025" y2="356.5" stroke="#777" stroke-width="1"/><line x1="1021" y1="364.1" x2="1025" y2="364.1" stroke="#777" stroke-width="1"/><line x1="1021" y1="371.8" x2="1025" y2="371.8" stroke="#777" stroke-width="1"/><line x1="1018" y1="379.4" x2="1025" y2="379.4" stroke="#777" stroke-width="1"/><line x1="1021" y1="387.0" x2="1025" y2="387.0" stroke="#777" stroke-width="1"/><line x1="1021" y1="394.7" x2="1025" y2="394.7" stroke="#777" stroke-width="1"/><line x1="1021" y1="402.3" x2="1025" y2="402.3" stroke="#777" stroke-width="1"/><line x1="1021" y1="410.0" x2="1025" y2="410.0" stroke="#777" stroke-width="1"/><line x1="1001" y1="417.6" x2="1025" y2="417.6" stroke="#777" stroke-width="1"/><text x="1005" y="431.6" font-size="13" fill="#a8a8a8" font-family="Liberation Sans">0</text><line x1="1021" y1="425.2" x2="1025" y2="425.2" stroke="#777" stroke-width="1"/><line x1="1021" y1="432.9" x2="1025" y2="432.9" stroke="#777" stroke-width="1"/><line x1="1021" y1="440.5" x2="1025" y2="440.5" stroke="#777" stroke-width="1"/><line x1="1021" y1="448.2" x2="1025" y2="448.2" stroke="#777" stroke-width="1"/><line x1="1018" y1="455.8" x2="1025" y2="455.8" stroke="#777" stroke-width="1"/><line x1="1021" y1="463.4" x2="1025" y2="463.4" stroke="#777" stroke-width="1"/><line x1="1021" y1="471.1" x2="1025" y2="471.1" stroke="#777" stroke-width="1"/><line x1="1021" y1="478.7" x2="1025" y2="478.7" stroke="#777" stroke-width="1"/><line x1="1021" y1="486.4" x2="1025" y2="486.4" stroke="#777" stroke-width="1"/><line x1="1001" y1="494.0" x2="1025" y2="494.0" stroke="#777" stroke-width="1"/><text x="1005" y="508.0" font-size="13" fill="#a8a8a8" font-family="Liberation Sans">2</text><text x="1005" y="522.0" font-size="13" fill="#a8a8a8" font-family="Liberation Sans">0</text><line x1="1021" y1="501.6" x2="1025" y2="501.6" stroke="#777" stroke-width="1"/><line x1="1021" y1="509.3" x2="1025" y2="509.3" stroke="#777" stroke-width="1"/><line x1="1021" y1="516.9" x2="1025" y2="516.9" stroke="#777" stroke-width="1"/><line x1="1021" y1="524.6" x2="1025" y2="524.6" stroke="#777" stroke-width="1"/><line x1="1018" y1="532.2" x2="1025" y2="532.2" stroke="#777" stroke-width="1"/><line x1="1021" y1="539.8" x2="1025" y2="539.8" stroke="#777" stroke-width="1"/><line x1="1021" y1="547.5" x2="1025" y2="547.5" stroke="#777" stroke-width="1"/><line x1="1021" y1="555.1" x2="1025" y2="555.1" stroke="#777" stroke-width="1"/><line x1="1021" y1="562.8" x2="1025" y2="562.8" stroke="#777" stroke-width="1"/><line x1="1001" y1="570.4" x2="1025" y2="570.4" stroke="#777" stroke-width="1"/><text x="1005" y="584.4" font-size="13" fill="#a8a8a8" font-family="Liberation Sans">4</text><text x="1005" y="598.4" font-size="13" fill="#a8a8a8" font-family="Liberation Sans">0</text><line x1="1021" y1="578.0" x2="1025" y2="578.0" stroke="#777" stroke-width="1"/><line x1="1021" y1="585.7" x2="1025" y2="585.7" stroke="#777" stroke-width="1"/><line x1="1021" y1="593.3" x2="1025" y2="593.3" stroke="#777" stroke-width="1"/><line x1="1021" y1="601.0" x2="1025" y2="601.0" stroke="#777" stroke-width="1"/><line x1="1018" y1="608.6" x2="1025" y2="608.6" stroke="#777" stroke-width="1"/><line x1="1021" y1="616.2" x2="1025" y2="616.2" stroke="#777" stroke-width="1"/><line x1="1021" y1="623.9" x2="1025" y2="623.9" stroke="#777" stroke-width="1"/><line x1="1021" y1="631.5" x2="1025" y2="631.5" stroke="#777" stroke-width="1"/><line x1="1021" y1="639.2" x2="1025" y2="639.2" stroke="#777" stroke-width="1"/><line x1="1001" y1="646.8" x2="1025" y2="646.8" stroke="#777" stroke-width="1"/><text x="1005" y="660.8" font-size="13" fill="#a8a8a8" font-family="Liberation Sans">6</text><text x="1005" y="674.8" font-size="13" fill="#a8a8a8" font-family="Liberation Sans">0</text><line x1="1021" y1="654.4" x2="1025" y2="654.4" stroke="#777" stroke-width="1"/><line x1="1021" y1="662.1" x2="1025" y2="662.1" stroke="#777" stroke-width="1"/><line x1="1021" y1="669.7" x2="1025" y2="669.7" stroke="#777" stroke-width="1"/><line x1="1021" y1="677.4" x2="1025" y2="677.4" stroke="#777" stroke-width="1"/><line x1="1018" y1="685.0" x2="1025" y2="685.0" stroke="#777" stroke-width="1"/><line x1="1021" y1="692.6" x2="1025" y2="692.6" stroke="#777" stroke-width="1"/><line x1="1021" y1="700.3" x2="1025" y2="700.3" stroke="#777" stroke-width="1"/><line x1="1021" y1="707.9" x2="1025" y2="707.9" stroke="#777" stroke-width="1"/><line x1="1021" y1="715.6" x2="1025" y2="715.6" stroke="#777" stroke-width="1"/><line x1="1001" y1="723.2" x2="1025" y2="723.2" stroke="#777" stroke-width="1"/><text x="1005" y="737.2" font-size="13" fill="#a8a8a8" font-family="Liberation Sans">8</text><text x="1005" y="751.2" font-size="13" fill="#a8a8a8" font-family="Liberation Sans">0</text><line x1="1021" y1="730.8" x2="1025" y2="730.8" stroke="#777" stroke-width="1"/><line x1="1021" y1="738.5" x2="1025" y2="738.5" stroke="#777" stroke-width="1"/><line x1="1021" y1="746.1" x2="1025" y2="746.1" stroke="#777" stroke-width="1"/><line x1="1021" y1="753.8" x2="1025" y2="753.8" stroke="#777" stroke-width="1"/><line x1="1018" y1="761.4" x2="1025" y2="761.4" stroke="#777" stroke-width="1"/><line x1="1021" y1="769.0" x2="1025" y2="769.0" stroke="#777" stroke-width="1"/><line x1="1021" y1="776.7" x2="1025" y2="776.7" stroke="#777" stroke-width="1"/><line x1="1021" y1="784.3" x2="1025" y2="784.3" stroke="#777" stroke-width="1"/><line x1="1021" y1="792.0" x2="1025" y2="792.0" stroke="#777" stroke-width="1"/><line x1="1001" y1="799.6" x2="1025" y2="799.6" stroke="#777" stroke-width="1"/><text x="1005" y="813.6" font-size="13" fill="#a8a8a8" font-family="Liberation Sans">1</text><text x="1005" y="827.6" font-size="13" fill="#a8a8a8" font-family="Liberation Sans">0</text><text x="1005" y="841.6" font-size="13" fill="#a8a8a8" font-family="Liberation Sans">0</text><line x1="1021" y1="807.2" x2="1025" y2="807.2" stroke="#777" stroke-width="1"/><line x1="1021" y1="814.9" x2="1025" y2="814.9" stroke="#777" stroke-width="1"/><line x1="1021" y1="822.5" x2="1025" y2="822.5" stroke="#777" stroke-width="1"/><line x1="1021" y1="830.2" x2="1025" y2="830.2" stroke="#777" stroke-width="1"/><line x1="1018" y1="837.8" x2="1025" y2="837.8" stroke="#777" stroke-width="1"/><line x1="1021" y1="845.4" x2="1025" y2="845.4" stroke="#777" stroke-width="1"/><line x1="1021" y1="853.1" x2="1025" y2="853.1" stroke="#777" stroke-width="1"/><line x1="1021" y1="860.7" x2="1025" y2="860.7" stroke="#777" stroke-width="1"/><line x1="1021" y1="868.4" x2="1025" y2="868.4" stroke="#777" stroke-width="1"/><line x1="1001" y1="876.0" x2="1025" y2="876.0" stroke="#777" stroke-width="1"/><text x="1005" y="890.0" font-size="13" fill="#a8a8a8" font-family="Liberation Sans">1</text><text x="1005" y="904.0" font-size="13" fill="#a8a8a8" font-family="Liberation Sans">2</text><text x="1005" y="918.0" font-size="13" fill="#a8a8a8" font-family="Liberation Sans">0</text><line x1="1021" y1="883.6" x2="1025" y2="883.6" stroke="#777" stroke-width="1"/><line x1="1021" y1="891.3" x2="1025" y2="891.3" stroke="#777" stroke-width="1"/><line x1="1021" y1="898.9" x2="1025" y2="898.9" stroke="#777" stroke-width="1"/><line x1="1021" y1="906.6" x2="1025" y2="906.6" stroke="#777" stroke-width="1"/><line x1="1018" y1="914.2" x2="1025" y2="914.2" stroke="#777" stroke-width="1"/><line x1="1021" y1="921.8" x2="1025" y2="921.8" stroke="#777" stroke-width="1"/><line x1="1021" y1="929.5" x2="1025" y2="929.5" stroke="#777" stroke-width="1"/><line x1="1021" y1="937.1" x2="1025" y2="937.1" stroke="#777" stroke-width="1"/><line x1="1021" y1="944.8" x2="1025" y2="944.8" stroke="#777" stroke-width="1"/><line x1="1001" y1="952.4" x2="1025" y2="952.4" stroke="#777" stroke-width="1"/><text x="1005" y="966.4" font-size="13" fill="#a8a8a8" font-family="Liberation Sans">1</text><text x="1005" y="980.4" font-size="13" fill="#a8a8a8" font-family="Liberation Sans">4</text><text x="1005" y="994.4" font-size="13" fill="#a8a8a8" font-family="Liberation Sans">0</text><line x1="1021" y1="960.0" x2="1025" y2="960.0" stroke="#777" stroke-width="1"/><line x1="1021" y1="967.7" x2="1025" y2="967.7" stroke="#777" stroke-width="1"/><line x1="1021" y1="975.3" x2="1025" y2="975.3" stroke="#777" stroke-width="1"/><line x1="1021" y1="983.0" x2="1025" y2="983.0" stroke="#777" stroke-width="1"/><line x1="1018" y1="990.6" x2="1025" y2="990.6" stroke="#777" stroke-width="1"/><line x1="1021" y1="998.2" x2="1025" y2="998.2" stroke="#777" stroke-width="1"/><line x1="1021" y1="1005.9" x2="1025" y2="1005.9" stroke="#777" stroke-width="1"/><line x1="1021" y1="1013.5" x2="1025" y2="1013.5" stroke="#777" stroke-width="1"/><line x1="1021" y1="1021.2" x2="1025" y2="1021.2" stroke="#777" stroke-width="1"/><line x1="1001" y1="1028.8" x2="1025" y2="1028.8" stroke="#777" stroke-width="1"/><text x="1005" y="1042.8" font-size="13" fill="#a8a8a8" font-family="Liberation Sans">1</text><text x="1005" y="1056.8" font-size="13" fill="#a8a8a8" font-family="Liberation Sans">6</text><text x="1005" y="1070.8" font-size="13" fill="#a8a8a8" font-family="Liberation Sans">0</text><line x1="1021" y1="1036.4" x2="1025" y2="1036.4" stroke="#777" stroke-width="1"/><line x1="1021" y1="1044.1" x2="1025" y2="1044.1" stroke="#777" stroke-width="1"/><line x1="1021" y1="1051.7" x2="1025" y2="1051.7" stroke="#777" stroke-width="1"/><line x1="1021" y1="1059.4" x2="1025" y2="1059.4" stroke="#777" stroke-width="1"/><line x1="1018" y1="1067.0" x2="1025" y2="1067.0" stroke="#777" stroke-width="1"/><line x1="1021" y1="1074.6" x2="1025" y2="1074.6" stroke="#777" stroke-width="1"/></svg>
<svg style="left:0;top:0" width="1920" height="1080"><g stroke="#6a6a6a" stroke-width="1"><line x1="957" y1="69" x2="957" y2="78"/><line x1="960" y1="69" x2="960" y2="78"/><line x1="963" y1="69" x2="963" y2="78"/><line x1="966" y1="69" x2="966" y2="78"/><line x1="969" y1="69" x2="969" y2="78"/><line x1="972" y1="69" x2="972" y2="78"/><line x1="975" y1="69" x2="975" y2="78"/><line x1="978" y1="69" x2="978" y2="78"/><line x1="981" y1="69" x2="981" y2="78"/><line x1="984" y1="69" x2="984" y2="78"/></g><path d="M952,53 L957,57 L952,61Z M958,53 L963,57 L958,61Z" fill="#cfcfcf"/><g stroke="#6a6a6a" stroke-width="1"><line x1="952" y1="12" x2="960" y2="12"/><line x1="952" y1="15" x2="960" y2="15"/><line x1="952" y1="18" x2="960" y2="18"/><line x1="952" y1="21" x2="960" y2="21"/><line x1="952" y1="24" x2="960" y2="24"/><line x1="952" y1="27" x2="960" y2="27"/><line x1="952" y1="30" x2="960" y2="30"/><line x1="952" y1="33" x2="960" y2="33"/><line x1="952" y1="36" x2="960" y2="36"/><line x1="952" y1="39" x2="960" y2="39"/></g><g stroke="#d8d8d8" stroke-width="1.8" fill="#d8d8d8"><line x1="977.5" y1="26" x2="994.5" y2="26"/><line x1="986" y1="17.5" x2="986" y2="34.5"/><path stroke-width="0.8" d="M975.5,26 l4.2,-3.2 v6.4 Z M996.5,26 l-4.2,-3.2 v6.4 Z M986,15.5 l-3.2,4.2 h6.4 Z M986,36.5 l-3.2,-4.2 h6.4 Z"/></g><rect x="951.5" y="89" width="41.5" height="33" rx="3" fill="#3a3a3a"/><g stroke="#d8d8d8" stroke-width="1.8" fill="#d8d8d8"><line x1="962.0" y1="106" x2="979.0" y2="106"/><line x1="970.5" y1="97.5" x2="970.5" y2="114.5"/><path stroke-width="0.8" d="M960.0,106 l4.2,-3.2 v6.4 Z M981.0,106 l-4.2,-3.2 v6.4 Z M970.5,95.5 l-3.2,4.2 h6.4 Z M970.5,116.5 l-3.2,-4.2 h6.4 Z"/></g><path d="M989.5,113 L989.5,118.5 L984,118.5Z" fill="#c8c8c8"/><rect x="961" y="132.5" width="20" height="16.5" fill="none" stroke="#d8d8d8" stroke-width="2" stroke-dasharray="4.5,2.5"/><path d="M989.5,149 L989.5,154.5 L984,154.5Z" fill="#c8c8c8"/><path d="M960.3,168 L970.5,172.6 L981,165.5 L981.5,178.7 L972,181.7 M960.3,168 L968,178.5 M968,182.5 L961.5,186 M969.5,183 L966.5,188" fill="none" stroke="#d8d8d8" stroke-width="1.5" stroke-linejoin="round"/><circle cx="969.5" cy="180.7" r="2" fill="none" stroke="#d8d8d8" stroke-width="1.4"/><path d="M989.5,185 L989.5,190.5 L984,190.5Z" fill="#c8c8c8"/><line x1="964" y1="221" x2="975" y2="210" stroke="#d8d8d8" stroke-width="5.5" stroke-linecap="round"/><path d="M969.4,200.5 v7 M966,204 h7 M981.7,200.5 v7 M978.2,204 h7 M979.5,212.8 h6.5 M982.7,210 v5.5" stroke="#d8d8d8" stroke-width="1.3"/><path d="M989.5,221 L989.5,226.5 L984,226.5Z" fill="#c8c8c8"/><path d="M964.5,236.5 V255 H976 M958,242 H962 M966.5,242 H977.5 V260 M979.5,255 H983.5" fill="none" stroke="#d8d8d8" stroke-width="2.2"/><path d="M989.5,257 L989.5,262.5 L984,262.5Z" fill="#c8c8c8"/><path d="M962.5,293.5 L972,284" stroke="#d8d8d8" stroke-width="5" stroke-linecap="round" fill="none"/><path d="M962.5,293.5 L972,284" stroke="#535353" stroke-width="2" stroke-linecap="round"/><path d="M971,279.5 L975.5,284 M973,282 L979,276" stroke="#d8d8d8" stroke-width="4.5" stroke-linecap="round"/><path d="M989.5,293 L989.5,298.5 L984,298.5Z" fill="#c8c8c8"/><g transform="rotate(-45 972 321)"><rect x="960" y="316.5" width="24" height="9" rx="2.5" fill="#d8d8d8"/><rect x="967" y="317.5" width="10" height="7" fill="#535353"/><circle cx="970" cy="319.7" r="0.9" fill="#d8d8d8"/><circle cx="974" cy="319.7" r="0.9" fill="#d8d8d8"/><circle cx="970" cy="322.5" r="0.9" fill="#d8d8d8"/><circle cx="974" cy="322.5" r="0.9" fill="#d8d8d8"/></g><path d="M960,315 Q961,309 967,308.5" fill="none" stroke="#d8d8d8" stroke-width="1.2" stroke-dasharray="1,1.6"/><path d="M989.5,329 L989.5,334.5 L984,334.5Z" fill="#c8c8c8"/><path d="M961,367 L963,360 L977,346 L982,351 L968,365 Z M963,360 L968,365" fill="none" stroke="#d8d8d8" stroke-width="1.7" stroke-linejoin="round"/><path d="M989.5,365 L989.5,370.5 L984,370.5Z" fill="#c8c8c8"/><circle cx="971.5" cy="387" r="4" fill="#d8d8d8"/><rect x="969.5" y="389" width="4" height="6" fill="#d8d8d8"/><rect x="962.5" y="394" width="18" height="5" rx="1" fill="#d8d8d8"/><rect x="963.5" y="401" width="16" height="2" fill="#d8d8d8"/><path d="M989.5,401 L989.5,406.5 L984,406.5Z" fill="#c8c8c8"/><path d="M966,433 L981,418 L979,426 L969,436 Z" fill="#d8d8d8"/><path d="M963,440 Q962,434 967,433 L969,436 Q968,440 963,440Z" fill="#d8d8d8"/><path d="M972,421 Q966,420 962,424" fill="none" stroke="#d8d8d8" stroke-width="1.3"/><path d="M959,425 L964,420 L965,426Z" fill="#d8d8d8"/><circle cx="974" cy="432" r="1" fill="#d8d8d8"/><circle cx="977" cy="429" r="1" fill="#d8d8d8"/><circle cx="971" cy="435" r="0.8" fill="#d8d8d8"/><path d="M989.5,437 L989.5,442.5 L984,442.5Z" fill="#c8c8c8"/><g transform="rotate(-40 972 465)"><rect x="960" y="460" width="22" height="10" rx="1.5" fill="none" stroke="#d8d8d8" stroke-width="1.6"/><rect x="968" y="460" width="14" height="10" fill="#d8d8d8"/></g><line x1="968" y1="473.5" x2="982" y2="473.5" stroke="#d8d8d8" stroke-width="1.6"/><path d="M989.5,473 L989.5,478.5 L984,478.5Z" fill="#c8c8c8"/><g transform="rotate(40 971 501)"><rect x="963" y="494" width="14" height="14" rx="1.5" fill="none" stroke="#d8d8d8" stroke-width="1.8"/></g><path d="M966,490 Q968,486 970,490 L971,496" fill="none" stroke="#d8d8d8" stroke-width="1.5"/><circle cx="971" cy="497" r="1.8" fill="#d8d8d8"/><path d="M980,503 Q983,507 982,509 A2.5,2.5 0 1 1 978,507 Q978,505 980,503Z" fill="#d8d8d8"/><path d="M989.5,509 L989.5,514.5 L984,514.5Z" fill="#c8c8c8"/><path d="M970.5,525 C973,531 978,535 978,539 A7.2,7.2 0 0 1 963.6,539 C963.6,535 968,531 970.5,525Z" fill="#d8d8d8"/><path d="M989.5,545 L989.5,550.5 L984,550.5Z" fill="#c8c8c8"/><circle cx="973.5" cy="569.5" r="7" fill="#d8d8d8"/><line x1="967" y1="576" x2="961" y2="582" stroke="#d8d8d8" stroke-width="2.2" stroke-linecap="round"/><path d="M989.5,581 L989.5,586.5 L984,586.5Z" fill="#c8c8c8"/><path d="M962,618 L966,606 L974,600 L980,606 L974,614 Z" fill="none" stroke="#d8d8d8" stroke-width="1.7" stroke-linejoin="round"/><path d="M974,600 L977,597 L983,603 L980,606" fill="#d8d8d8" stroke="#d8d8d8" stroke-width="1.5"/><line x1="962" y1="618" x2="970" y2="610" stroke="#d8d8d8" stroke-width="1.3"/><circle cx="970.5" cy="609.5" r="1.5" fill="#d8d8d8"/><path d="M989.5,617 L989.5,622.5 L984,622.5Z" fill="#c8c8c8"/><path d="M964,635 H981 V640 M964,635 V640 M972.5,635 V652 M968,652 H977" fill="none" stroke="#d8d8d8" stroke-width="2.6"/><path d="M989.5,652 L989.5,657.5 L984,657.5Z" fill="#c8c8c8"/><path d="M966.5,669 L966.5,687 L970.5,683 L974,690 L977,688.5 L973.5,681.5 L979,681 Z" fill="#111" stroke="#e0e0e0" stroke-width="1.5" stroke-linejoin="round"/><path d="M989.5,688 L989.5,693.5 L984,693.5Z" fill="#c8c8c8"/><rect x="961" y="707" width="20" height="16.5" fill="#767676" stroke="#d8d8d8" stroke-width="1.8"/><path d="M989.5,723 L989.5,728.5 L984,728.5Z" fill="#c8c8c8"/><path d="M963,750 Q961,747 963,746 Q965,746 967,750 V742 Q967,740 969,740 Q971,740 971,742 V740 Q971,738.5 973,738.5 Q975,738.5 975,740 V742 Q975,740.5 977,740.5 Q979,740.5 979,742.5 V756 Q979,763 972,763 Q967,763 963,752Z" fill="#d8d8d8"/><path d="M989.5,759 L989.5,764.5 L984,764.5Z" fill="#c8c8c8"/><circle cx="968" cy="785" r="7" fill="none" stroke="#d8d8d8" stroke-width="2"/><line x1="973" y1="790" x2="980.5" y2="797" stroke="#d8d8d8" stroke-width="2.4" stroke-linecap="round"/><circle cx="963" cy="823" r="2.8" fill="#d8d8d8"/><circle cx="971.2" cy="823" r="2.8" fill="#d8d8d8"/><circle cx="979.5" cy="823" r="2.8" fill="#d8d8d8"/><path d="M989.5,828 L989.5,833.5 L984,833.5Z" fill="#c8c8c8"/><rect x="953.5" y="849.5" width="7" height="7" fill="#111" stroke="#eee" stroke-width="1"/><rect x="958" y="854" width="6" height="6" fill="#eee"/><path d="M977,853 H985 V860 M975,855 L977,852.5 L979.5,855 M982.5,858 L985,860.5 L987.5,858" fill="none" stroke="#d8d8d8" stroke-width="1.5"/><rect x="966.5" y="884.5" width="24" height="24" fill="#fff" stroke="#3a3a3a" stroke-width="1"/><rect x="952.5" y="871.5" width="25" height="24" fill="#777" stroke="#f0f0f0" stroke-width="2"/><rect x="951.5" y="870.5" width="27" height="26" fill="none" stroke="#3a3a3a" stroke-width="0.8"/><rect x="960" y="926.5" width="22" height="17" fill="none" stroke="#d8d8d8" stroke-width="1.8"/><circle cx="971" cy="935" r="5" fill="none" stroke="#d8d8d8" stroke-width="1.3" stroke-dasharray="1.2,1.4"/><rect x="966.5" y="963" width="15" height="11" fill="#535353" stroke="#d8d8d8" stroke-width="1.6"/><path d="M966.5,966.5 H960 V980 H974 V974" fill="none" stroke="#d8d8d8" stroke-width="1.6"/><path d="M989.5,976 L989.5,981.5 L984,981.5Z" fill="#c8c8c8"/></svg>
<div style="left:1327px;top:0px;width:393px;height:574px;background:#f0f0f0;box-shadow:2px 2px 3px rgba(0,0,0,0.45);border:1px solid #a0a0a0;border-top:none"></div>
<div style="left:1331px;top:453px;width:386px;height:27px;background:#0078d7;"></div>
<div class="t" style="left:1355px;top:2.0px;font-size:16px;color:#787878;font-weight:400;">Last Filter</div>
<div class="t" style="right:226px;top:2.0px;font-size:16px;color:#787878;letter-spacing:0.45px">Alt+Ctrl+F</div>
<div style="left:1333px;top:27px;width:383px;height:2px;background:#c4c4c4;"></div>
<div class="t" style="left:1355px;top:41.5px;font-size:16px;color:#000000;font-weight:400;">Convert for Smart Filters</div>
<div style="left:1333px;top:65px;width:383px;height:2px;background:#c4c4c4;"></div>
<div class="t" style="left:1355px;top:80.5px;font-size:16px;color:#000000;font-weight:400;">Filter Gallery...</div>
<div class="t" style="left:1355px;top:106.5px;font-size:16px;color:#787878;font-weight:400;">Adaptive Wide Angle...</div>
<div class="t" style="right:226px;top:106.5px;font-size:16px;color:#787878;letter-spacing:0.45px">Alt+Shift+Ctrl+A</div>
<div class="t" style="left:1355px;top:132.5px;font-size:16px;color:#000000;font-weight:400;">Camera Raw Filter...</div>
<div class="t" style="right:226px;top:132.5px;font-size:16px;color:#000000;letter-spacing:0.45px">Shift+Ctrl+A</div>
<div class="t" style="left:1355px;top:159.5px;font-size:16px;color:#787878;font-weight:400;">Lens Correction...</div>
<div class="t" style="right:226px;top:159.5px;font-size:16px;color:#787878;letter-spacing:0.45px">Shift+Ctrl+R</div>
<div class="t" style="left:1355px;top:185.5px;font-size:16px;color:#000000;font-weight:400;">Liquify...</div>
<div class="t" style="right:226px;top:185.5px;font-size:16px;color:#000000;letter-spacing:0.45px">Shift+Ctrl+X</div>
<div class="t" style="left:1355px;top:211.5px;font-size:16px;color:#787878;font-weight:400;">Vanishing Point...</div>
<div class="t" style="right:226px;top:211.5px;font-size:16px;color:#787878;letter-spacing:0.45px">Alt+Ctrl+V</div>
<div style="left:1333px;top:235px;width:383px;height:2px;background:#c4c4c4;"></div>
<div class="t" style="left:1355px;top:251.5px;font-size:16px;color:#787878;font-weight:400;">3D</div>
<div class="t" style="left:1355px;top:277.5px;font-size:16px;color:#000000;font-weight:400;">Blur</div>
<div class="t" style="left:1355px;top:304.5px;font-size:16px;color:#787878;font-weight:400;">Blur Gallery</div>
<div class="t" style="left:1355px;top:330.5px;font-size:16px;color:#000000;font-weight:400;">Distort</div>
<div class="t" style="left:1355px;top:356.5px;font-size:16px;color:#000000;font-weight:400;">Noise</div>
<div class="t" style="left:1355px;top:382.5px;font-size:16px;color:#000000;font-weight:400;">Pixelate</div>
<div class="t" style="left:1355px;top:408.5px;font-size:16px;color:#000000;font-weight:400;">Render</div>
<div class="t" style="left:1355px;top:434.5px;font-size:16px;color:#000000;font-weight:400;">Sharpen</div>
<div class="t" style="left:1355px;top:461.5px;font-size:16px;color:#ffffff;font-weight:400;">Stylize</div>
<div class="t" style="left:1355px;top:487.5px;font-size:16px;color:#000000;font-weight:400;">Video</div>
<div class="t" style="left:1355px;top:513.5px;font-size:16px;color:#000000;font-weight:400;">Other</div>
<div style="left:1333px;top:536px;width:383px;height:2px;background:#c4c4c4;"></div>
<div class="t" style="left:1355px;top:550.5px;font-size:16px;color:#000000;font-weight:400;">Browse Filters Online...</div>
<svg style="left:0;top:0" width="1920" height="600"><path d="M1701 253 L1706 258 L1701 263 Z" fill="#6d6d6d"/><path d="M1701 279 L1706 284 L1701 289 Z" fill="#000"/><path d="M1701 306 L1706 311 L1701 316 Z" fill="#6d6d6d"/><path d="M1701 332 L1706 337 L1701 342 Z" fill="#000"/><path d="M1701 358 L1706 363 L1701 368 Z" fill="#000"/><path d="M1701 384 L1706 389 L1701 394 Z" fill="#000"/><path d="M1701 410 L1706 415 L1701 420 Z" fill="#000"/><path d="M1701 436 L1706 441 L1701 446 Z" fill="#000"/><path d="M1701 463 L1706 468 L1701 473 Z" fill="#ffffff"/><path d="M1701 489 L1706 494 L1701 499 Z" fill="#000"/><path d="M1701 515 L1706 520 L1701 525 Z" fill="#000"/></svg>
<div style="left:1099px;top:449px;width:232px;height:243px;background:#f0f0f0;box-shadow:2px 2px 3px rgba(0,0,0,0.45);border:1px solid #a0a0a0"></div>
<div style="left:1104px;top:532px;width:223px;height:26px;background:#0078d7;"></div>
<div class="t" style="left:1127px;top:459px;font-size:16px;color:#000;font-weight:400;">Diffuse...</div>
<div class="t" style="left:1127px;top:485px;font-size:16px;color:#000;font-weight:400;">Emboss...</div>
<div class="t" style="left:1127px;top:512px;font-size:16px;color:#000;font-weight:400;">Extrude...</div>
<div class="t" style="left:1127px;top:538px;font-size:16px;color:#fff;font-weight:400;">Find Edges</div>
<div class="t" style="left:1127px;top:564px;font-size:16px;color:#787878;font-weight:400;">Oil Paint...</div>
<div class="t" style="left:1127px;top:590px;font-size:16px;color:#000;font-weight:400;">Solarize</div>
<div class="t" style="left:1127px;top:616px;font-size:16px;color:#000;font-weight:400;">Tiles...</div>
<div class="t" style="left:1127px;top:643px;font-size:16px;color:#000;font-weight:400;">Trace Contour...</div>
<div class="t" style="left:1127px;top:669px;font-size:16px;color:#000;font-weight:400;">Wind...</div>
<div class="t" style="left:1225px;top:538px;font-size:16px;color:#fff;font-weight:400;letter-spacing:0.4px">Alt+Ctrl+D</div></body></html>
